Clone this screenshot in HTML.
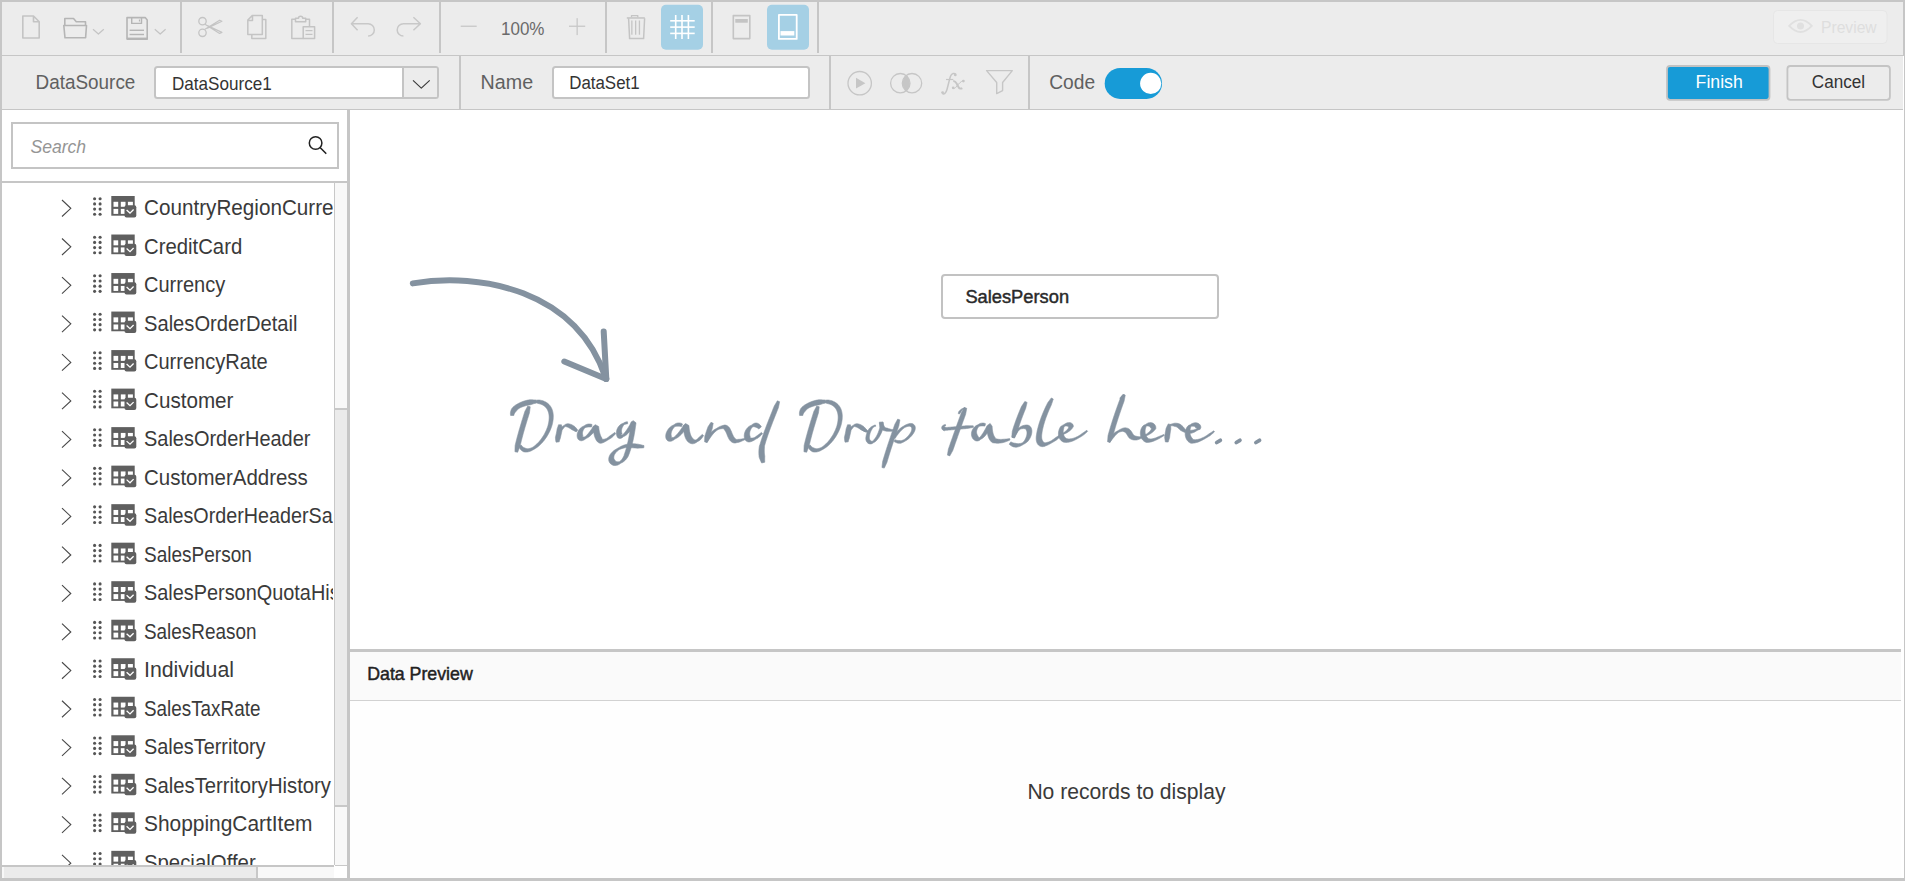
<!DOCTYPE html>
<html><head><meta charset="utf-8"><style>
html,body{margin:0;padding:0;width:1907px;height:882px;overflow:hidden;background:#fff;}
body{position:relative;font-family:"Liberation Sans", sans-serif;}
.t{position:absolute;white-space:nowrap;}
svg{position:absolute;left:0;top:0;}
#tree{position:absolute;left:2px;top:183px;width:331px;height:682px;overflow:hidden;}
#tree .inner{position:absolute;left:-2px;top:-183px;width:1907px;height:882px;}
</style></head><body>
<svg width="1907" height="882" viewBox="0 0 1907 882">
<rect x="0" y="0" width="1905" height="881" fill="#c6c6c6" />
<rect x="2" y="2" width="1901" height="53" fill="#ececec" />
<rect x="2" y="55" width="1901" height="1" fill="#c6c6c6" />
<rect x="2" y="56" width="1901" height="53" fill="#ececec" />
<rect x="2" y="109" width="1901" height="1" fill="#c6c6c6" />
<rect x="2" y="110" width="345" height="768" fill="#ffffff" />
<rect x="350" y="110" width="1553" height="539" fill="#ffffff" />
<rect x="350" y="652" width="1553" height="48" fill="#fafafa" />
<rect x="350" y="700" width="1553" height="1" fill="#d2d2d2" />
<rect x="350" y="701" width="1553" height="177" fill="#fefefe" />
<rect x="2" y="181" width="345" height="2" fill="#c6c6c6" />
<rect x="11" y="122" width="328" height="47" fill="#c4c4c4" />
<rect x="13" y="124" width="324" height="43" fill="#ffffff" />
<rect x="2" y="865" width="332" height="2" fill="#c6c6c6" />
<rect x="2" y="867" width="332" height="11" fill="#f8f8f8" />
<rect x="4" y="867" width="252" height="11" fill="#ebebeb" />
<rect x="256" y="867" width="2" height="11" fill="#c8c8c8" />
<rect x="334" y="182" width="1" height="684" fill="#c8c8c8" />
<rect x="335" y="183" width="12" height="682" fill="#f8f8f8" />
<rect x="335" y="408" width="12" height="2" fill="#c8c8c8" />
<rect x="335" y="410" width="12" height="395" fill="#ebebeb" />
<rect x="335" y="805" width="12" height="2" fill="#c8c8c8" />
<rect x="334" y="865" width="13" height="13" fill="#ffffff" />
<rect x="335" y="865" width="12" height="1" fill="#c8c8c8" />
<rect x="0" y="878" width="1905" height="3" fill="#c6c6c6" />
<rect x="1903" y="56" width="1" height="822" fill="#ffffff" />
<rect x="1901" y="649" width="2" height="229" fill="#ffffff" />
<rect x="180" y="2" width="2" height="51" fill="#c6c6c6" />
<rect x="332" y="2" width="2" height="51" fill="#c6c6c6" />
<rect x="439" y="2" width="2" height="51" fill="#c6c6c6" />
<rect x="605" y="2" width="2" height="51" fill="#c6c6c6" />
<rect x="711" y="2" width="2" height="51" fill="#c6c6c6" />
<rect x="817" y="2" width="2" height="51" fill="#c6c6c6" />
<path d="M22.8 16 H33.5 L39.2 21.7 V38 H22.8 Z M33.5 16 V21.7 H39.2" stroke="#c4c4c4" stroke-width="1.6" fill="none" stroke-linejoin="round" />
<path d="M64.8 25.5 V18.5 H73.5 L76.3 21.8 H85.5 V25.5 M63.8 25.5 H86.5 L85.6 37.8 H65 Z" stroke="#b5b5b5" stroke-width="1.6" fill="none" stroke-linejoin="round" />
<path d="M93 29.2 L98.4 34 L103.8 29.2" stroke="#c4c4c4" stroke-width="1.2" fill="none" stroke-linejoin="round" />
<path d="M127 17.6 H145.2 L147.2 20 V39.1 H127 Z" stroke="#b5b5b5" stroke-width="1.6" fill="none" stroke-linejoin="round" />
<rect x="127" y="37.6" width="20.6" height="2.2" fill="#b5b5b5" />
<path d="M131.7 17.6 V23.4 H141.5 V17.6" stroke="#b5b5b5" stroke-width="1.4" fill="none" stroke-linejoin="round" />
<rect x="138.9" y="19.5" width="1.2" height="2" fill="#b5b5b5" />
<rect x="129.6" y="29.6" width="14.4" height="1.4" fill="#b5b5b5" />
<rect x="129.6" y="33.8" width="14.4" height="1.4" fill="#b5b5b5" />
<path d="M154.8 29.2 L160.2 34 L165.6 29.2" stroke="#c4c4c4" stroke-width="1.2" fill="none" stroke-linejoin="round" />
<circle cx="202.5" cy="21.2" r="3.7" stroke="#c4c4c4" stroke-width="1.3" fill="none"/>
<circle cx="202.5" cy="32.8" r="3.7" stroke="#c4c4c4" stroke-width="1.3" fill="none"/>
<path d="M205 29.3 L219.6 20.2 L221.9 21.2 L207.4 28.1 M205 24.3 L219.6 33.4 L221.9 32.4 L207.4 25.5" stroke="#c4c4c4" stroke-width="1.2" fill="none" stroke-linejoin="round" />
<path d="M251.8 34.6 V38.5 H265.8 V19.4 H262.3" stroke="#c4c4c4" stroke-width="1.5" fill="none" stroke-linejoin="round" />
<path d="M247.8 20 L252.5 15.4 H262.3 V34.5 H247.8 Z M252.5 15.4 V20.5 H247.8" stroke="#c4c4c4" stroke-width="1.5" fill="none" stroke-linejoin="round" />
<path d="M295.5 19.3 H291.8 V38.5 H303.2 M305.7 19.3 H309.5 V26.8" stroke="#c4c4c4" stroke-width="1.5" fill="none" stroke-linejoin="round" />
<path d="M295.5 21.7 V18.3 H298.5 A2.1 2.1 0 0 1 302.7 18.3 H305.7 V21.7 Z" stroke="#c4c4c4" stroke-width="1.5" fill="none" stroke-linejoin="round" />
<path d="M303.2 26.8 H314.6 V38.5 H303.2 Z" stroke="#c4c4c4" stroke-width="1.5" fill="none" stroke-linejoin="round" />
<rect x="305.5" y="30" width="7" height="1.2" fill="#c4c4c4" />
<rect x="305.5" y="33.8" width="7" height="1.2" fill="#c4c4c4" />
<path d="M357.6 17.3 L351.4 23.7 L357.6 30.3 M351.4 23.7 H368.1 A6.2 6.2 0 0 1 368.1 36.1" stroke="#c8c8c8" stroke-width="1.5" fill="none" stroke-linejoin="round" />
<path d="M413.4 17.3 L420.4 23.7 L413.4 30.3 M420.4 23.7 H403.4 A6.2 6.2 0 0 0 403.4 36.1" stroke="#c8c8c8" stroke-width="1.5" fill="none" stroke-linejoin="round" />
<rect x="460.7" y="25.6" width="16" height="1.3" fill="#c8c8c8" />
<rect x="569" y="25.6" width="16.2" height="1.3" fill="#c8c8c8" />
<rect x="576.5" y="18.2" width="1.3" height="16.9" fill="#c8c8c8" />
<path d="M628.6 18.2 L629.6 38.6 H643.6 L644.6 18.2" stroke="#c4c4c4" stroke-width="1.5" fill="none" stroke-linejoin="round" />
<rect x="626.8" y="17.2" width="18" height="1.5" fill="#c4c4c4" />
<path d="M631.5 17.2 V15.6 H637.8 V17.2" stroke="#c4c4c4" stroke-width="1.3" fill="none" stroke-linejoin="round" />
<rect x="631.1999999999999" y="20.5" width="1.3" height="14.2" fill="#c4c4c4" />
<rect x="635.0" y="20.5" width="1.3" height="14.2" fill="#c4c4c4" />
<rect x="638.8" y="20.5" width="1.3" height="14.2" fill="#c4c4c4" />
<rect x="661" y="4.8" width="42" height="45" rx="5" fill="#a5d0e5"/>
<rect x="674.9000000000001" y="15" width="1.6" height="24" fill="#ffffff" />
<rect x="681.2" y="15" width="1.6" height="24" fill="#ffffff" />
<rect x="687.6" y="15" width="1.6" height="24" fill="#ffffff" />
<rect x="670.2" y="20.0" width="24.5" height="1.6" fill="#ffffff" />
<rect x="670.2" y="26.3" width="24.5" height="1.6" fill="#ffffff" />
<rect x="670.2" y="32.6" width="24.5" height="1.6" fill="#ffffff" />
<path d="M733.3 15.6 H749.8 V38.6 H733.3 Z" stroke="#c4c4c4" stroke-width="1.6" fill="none" stroke-linejoin="round" />
<rect x="735.3" y="19" width="12.5" height="3.7" fill="#c4c4c4" />
<rect x="767" y="4.8" width="42" height="45" rx="5" fill="#a5d0e5"/>
<path d="M778.9 14.9 H796.7 V38.9 H778.9 Z" stroke="#ffffff" stroke-width="1.8" fill="none" stroke-linejoin="round" />
<rect x="780.5" y="31.1" width="13.8" height="4.4" fill="#ffffff" />
<rect x="1773.5" y="10.5" width="113.5" height="33" rx="4" fill="#efefef" stroke="#e6e6e6" stroke-width="1"/>
<path d="M1789.2 25.9 Q1800.5 13.8 1811.8 25.9 Q1800.5 38 1789.2 25.9 Z" stroke="#e0e0e0" stroke-width="1.9" fill="none"/>
<circle cx="1800.5" cy="25.9" r="3.5" fill="#e0e0e0"/>
<rect x="459" y="56" width="2" height="53" fill="#c6c6c6" />
<rect x="829" y="56" width="2" height="53" fill="#c6c6c6" />
<rect x="1028" y="56" width="2" height="53" fill="#c6c6c6" />
<rect x="155" y="67" width="283" height="31" rx="2.5" fill="#ffffff" stroke="#c4c4c4" stroke-width="2"/>
<path d="M403 68 H435.5 Q437 68 437 69.5 V95.5 Q437 97 435.5 97 H403 Z" fill="#ececec"/>
<rect x="402" y="67" width="2" height="31" fill="#c4c4c4" />
<path d="M413 80.3 L421.3 88.2 L429.7 80.3" stroke="#3a3a3a" stroke-width="1.15" fill="none" stroke-linejoin="round" />
<rect x="553" y="67" width="256" height="31" rx="2.5" fill="#ffffff" stroke="#c4c4c4" stroke-width="2"/>
<circle cx="859.7" cy="83.2" r="11.7" stroke="#c6c6c6" stroke-width="1.3" fill="none"/>
<path d="M856 77.8 L865.4 83.2 L856 88.5 Z" stroke="none" stroke-width="0" fill="#c6c6c6" stroke-linejoin="round" />
<circle cx="900.3" cy="83.2" r="9.7" stroke="#c6c6c6" stroke-width="1.3" fill="none"/>
<circle cx="912" cy="83.2" r="9.7" stroke="#c6c6c6" stroke-width="1.3" fill="none"/>
<path d="M906.15 75.6 A9.7 9.7 0 0 1 906.15 90.8 A9.7 9.7 0 0 1 906.15 75.6 Z" stroke="none" stroke-width="0" fill="#c6c6c6" stroke-linejoin="round" />
<path d="M955.8 74.4 C954.6 72.8 951.6 72.9 950.4 76.4 C949.2 80 948.1 85.8 946.9 89.8 C945.9 93.2 944.1 94.8 942.3 93.4" stroke="#c6c6c6" stroke-width="1.5" fill="none" stroke-linejoin="round" />
<circle cx="955.3" cy="74.9" r="1.4" fill="#c6c6c6"/>
<circle cx="942.6" cy="92.6" r="1.4" fill="#c6c6c6"/>
<rect x="946" y="78.9" width="7.3" height="1.2" fill="#c6c6c6" />
<path d="M953.2 81.2 C955.2 80.8 956.2 82.5 957.2 84.5 L958.6 87.2 C959.3 88.6 960.8 89 962.3 88.2" stroke="#c6c6c6" stroke-width="1.9" fill="none" stroke-linejoin="round" />
<path d="M963.6 80.6 C961 81.2 958.2 84 955.8 87.3 C955 88.4 953.8 88.9 952.5 88.2" stroke="#c6c6c6" stroke-width="1.0" fill="none" stroke-linejoin="round" />
<circle cx="963.4" cy="81.1" r="1.35" fill="#c6c6c6"/>
<circle cx="953.2" cy="87.8" r="1.35" fill="#c6c6c6"/>
<path d="M986.6 70.6 H1012.3 L1002.6 82.5 V90.6 L996.7 93.6 V82.5 Z" stroke="#c6c6c6" stroke-width="1.4" fill="none" stroke-linejoin="round" />
<rect x="1104.7" y="67.9" width="57.3" height="31" rx="15.5" fill="#179bd7"/>
<circle cx="1150.7" cy="83.4" r="10.6" fill="#ffffff"/>
<rect x="1667" y="66" width="102.5" height="33.8" rx="3" fill="#179bd7" stroke="#c2c2c2" stroke-width="1.8"/>
<rect x="1787.4" y="66" width="102.5" height="33.8" rx="3" fill="#ececec" stroke="#c4c4c4" stroke-width="1.8"/>
<circle cx="315.6" cy="143" r="6.3" stroke="#222222" stroke-width="1.5" fill="none"/>
<path d="M320.3 147.8 L325.8 153.3" stroke="#222222" stroke-width="1.6" fill="none" stroke-linejoin="round" stroke-linecap="round"/>
<rect x="942" y="275" width="276" height="43" rx="3" fill="#fff" stroke="#c2c2c2" stroke-width="2"/>
<path d="M412.8 283.4 C480 272 576 290 605.5 377.5" stroke="#8492a0" stroke-width="5.9" fill="none" stroke-linecap="round" stroke-linejoin="round"/>
<path d="M603.7 331.5 L606.3 379" stroke="#8492a0" stroke-width="6" fill="none" stroke-linecap="round" stroke-linejoin="round"/>
<path d="M564.3 361.5 L606.3 379" stroke="#8492a0" stroke-width="6" fill="none" stroke-linecap="round" stroke-linejoin="round"/>
<path d="M527.74 406.00 L527.37 406.69 L527.01 407.38 L526.64 408.07 L526.27 408.76 L525.91 409.45 L525.54 410.14 L525.17 410.83 L524.83 411.54 L524.60 412.27 L524.37 413.01 L524.13 413.74 L523.90 414.48 L523.67 415.21 L523.44 415.95 L523.21 416.69 L522.98 417.42 L522.75 418.16 L522.52 418.89 L522.30 419.63 L522.07 420.36 L521.84 421.10 L521.62 421.83 L521.40 422.56 L521.18 423.30 L520.96 424.03 L520.74 424.76 L520.52 425.49 L520.30 426.22 L520.09 426.95 L519.87 427.68 L519.66 428.40 L519.45 429.13 L519.24 429.85 L519.03 430.58 L518.83 431.30 L518.62 432.02 L518.42 432.74 L518.22 433.46 L518.02 434.18 L517.82 434.89 L517.63 435.61 L517.44 436.32 L517.25 437.03 L517.06 437.74 L516.87 438.45 L516.69 439.16 L516.51 439.86 L516.33 440.57 L516.15 441.27 L515.98 441.97 L515.81 442.66 L515.64 443.36 L515.47 444.05 L515.31 444.74 L515.15 445.43 L515.09 446.14 L515.06 446.85 L515.04 447.56 L515.02 448.27 L515.00 448.97 L514.98 449.67 L514.96 450.36 L514.95 451.05 L514.95 451.74 L517.65 452.26 L517.90 451.63 L518.16 451.00 L518.41 450.37 L518.67 449.74 L518.93 449.10 L519.20 448.46 L519.47 447.82 L519.74 447.18 L519.99 446.53 L520.14 445.86 L520.29 445.18 L520.45 444.50 L520.61 443.82 L520.78 443.13 L520.94 442.45 L521.11 441.76 L521.28 441.07 L521.45 440.37 L521.63 439.68 L521.81 438.98 L521.99 438.28 L522.17 437.58 L522.36 436.88 L522.55 436.17 L522.74 435.46 L522.93 434.76 L523.12 434.05 L523.32 433.33 L523.52 432.62 L523.72 431.91 L523.92 431.19 L524.13 430.47 L524.33 429.75 L524.54 429.03 L524.75 428.31 L524.96 427.59 L525.17 426.87 L525.38 426.14 L525.60 425.42 L525.82 424.69 L526.03 423.96 L526.25 423.23 L526.47 422.51 L526.70 421.78 L526.92 421.05 L527.14 420.32 L527.37 419.58 L527.59 418.85 L527.82 418.12 L528.05 417.39 L528.27 416.66 L528.50 415.92 L528.73 415.19 L528.96 414.46 L529.19 413.73 L529.43 412.99 L529.55 412.23 L529.65 411.45 L529.75 410.68 L529.85 409.90 L529.95 409.13 L530.06 408.35 L530.16 407.58 L530.26 406.80Z" fill="#8492a0" stroke="#8492a0" stroke-width="0.6" stroke-linejoin="round"/>
<path d="M513.80 415.51 L513.92 414.98 L514.06 414.53 L514.22 414.11 L514.40 413.71 L514.60 413.32 L514.81 412.96 L515.05 412.60 L515.31 412.27 L515.58 411.94 L515.88 411.62 L516.16 411.29 L516.42 410.92 L516.71 410.55 L517.03 410.18 L517.38 409.81 L517.77 409.45 L518.19 409.09 L518.63 408.73 L519.12 408.39 L519.63 408.05 L520.19 407.76 L520.78 407.48 L521.39 407.21 L522.03 406.95 L522.69 406.70 L523.38 406.45 L524.09 406.22 L524.82 406.00 L525.57 405.79 L526.35 405.59 L527.15 405.40 L527.97 405.22 L528.81 405.06 L529.66 404.91 L530.54 404.75 L531.41 404.44 L532.30 404.15 L533.22 403.85 L534.15 403.57 L535.11 403.30 L536.10 403.03 L535.90 400.17 L534.85 400.05 L533.81 399.95 L532.77 399.87 L531.74 399.81 L530.73 399.78 L529.72 399.76 L528.76 399.92 L527.81 400.11 L526.88 400.32 L525.97 400.55 L525.08 400.79 L524.21 401.04 L523.35 401.32 L522.52 401.60 L521.71 401.91 L520.92 402.23 L520.15 402.56 L519.41 402.92 L518.69 403.29 L517.99 403.67 L517.31 404.07 L516.64 404.45 L515.98 404.85 L515.35 405.26 L514.75 405.70 L514.16 406.15 L513.60 406.62 L513.07 407.11 L512.56 407.63 L512.08 408.17 L511.69 408.77 L511.37 409.41 L511.10 410.07 L510.87 410.74 L510.68 411.41 L510.54 412.10 L510.46 412.78 L510.42 413.48 L510.43 414.17 L510.49 414.86 L510.60 415.49Z" fill="#8492a0" stroke="#8492a0" stroke-width="0.6" stroke-linejoin="round"/>
<path d="M533.05 402.51 L534.02 402.59 L534.94 402.71 L535.83 402.86 L536.67 403.04 L537.47 403.25 L538.23 403.48 L538.95 403.70 L539.65 403.87 L540.32 404.06 L540.96 404.28 L541.56 404.51 L542.13 404.77 L542.68 405.04 L543.19 405.33 L543.67 405.63 L544.13 405.95 L544.56 406.28 L544.97 406.63 L545.36 406.99 L545.72 407.36 L546.06 407.75 L546.39 408.15 L546.69 408.57 L546.98 409.01 L547.25 409.45 L547.50 409.92 L547.74 410.40 L547.96 410.90 L548.16 411.41 L548.34 411.95 L548.51 412.50 L548.65 413.06 L548.78 413.65 L548.89 414.25 L548.98 414.87 L549.06 415.50 L549.11 416.15 L549.14 416.81 L549.15 417.48 L549.14 418.17 L549.11 418.87 L549.06 419.59 L549.00 420.31 L548.91 421.05 L548.80 421.79 L548.67 422.55 L548.52 423.31 L548.35 424.08 L548.16 424.85 L547.95 425.64 L547.73 426.41 L547.47 427.22 L547.17 428.05 L546.85 428.87 L546.52 429.69 L546.17 430.49 L545.80 431.29 L545.42 432.08 L545.02 432.87 L544.61 433.64 L544.19 434.40 L543.75 435.15 L543.31 435.89 L542.85 436.61 L542.37 437.33 L541.89 438.03 L541.40 438.71 L540.91 439.38 L540.40 440.03 L539.88 440.67 L539.36 441.29 L538.84 441.89 L538.30 442.47 L537.77 443.03 L537.23 443.58 L536.68 444.10 L536.14 444.61 L535.59 445.09 L535.04 445.55 L534.49 445.99 L533.94 446.41 L533.39 446.80 L532.84 447.17 L532.27 447.47 L531.70 447.73 L531.14 447.96 L530.58 448.16 L530.03 448.32 L529.49 448.46 L528.97 448.56 L528.46 448.63 L527.96 448.67 L527.48 448.68 L527.02 448.66 L526.58 448.61 L526.27 448.50 L525.49 448.26 L524.85 447.96 L524.25 447.74 L523.71 447.48 L523.22 447.18 L522.76 446.85 L522.34 446.47 L521.96 446.05 L521.63 445.61 L521.33 445.10 L519.07 445.90 L519.20 446.60 L519.44 447.39 L519.77 448.18 L520.23 448.97 L520.81 449.74 L521.53 450.46 L522.38 451.10 L523.37 451.64 L524.52 451.94 L525.73 452.10 L526.50 452.05 L527.15 451.99 L527.79 451.89 L528.44 451.76 L529.07 451.59 L529.71 451.40 L530.34 451.17 L530.96 450.91 L531.59 450.63 L532.21 450.32 L532.83 449.99 L533.45 449.63 L534.07 449.25 L534.71 448.90 L535.36 448.51 L536.00 448.10 L536.64 447.66 L537.28 447.20 L537.91 446.71 L538.54 446.20 L539.16 445.66 L539.78 445.11 L540.39 444.53 L541.00 443.93 L541.60 443.31 L542.19 442.67 L542.78 442.01 L543.35 441.33 L543.92 440.63 L544.48 439.92 L545.02 439.19 L545.56 438.45 L546.08 437.69 L546.59 436.92 L547.09 436.13 L547.58 435.33 L548.05 434.51 L548.51 433.68 L548.95 432.85 L549.38 432.00 L549.79 431.14 L550.18 430.27 L550.56 429.39 L550.91 428.50 L551.27 427.59 L551.56 426.72 L551.82 425.87 L552.06 425.02 L552.28 424.17 L552.48 423.33 L552.66 422.49 L552.82 421.66 L552.95 420.83 L553.06 420.00 L553.15 419.18 L553.22 418.37 L553.26 417.57 L553.28 416.77 L553.28 415.97 L553.24 415.19 L553.19 414.41 L553.11 413.65 L553.00 412.89 L552.86 412.14 L552.70 411.40 L552.50 410.68 L552.28 409.97 L552.02 409.27 L551.74 408.59 L551.42 407.92 L551.07 407.27 L550.69 406.64 L550.27 406.03 L549.82 405.44 L549.34 404.88 L548.83 404.34 L548.28 403.83 L547.71 403.34 L547.10 402.89 L546.47 402.47 L545.81 402.07 L545.12 401.71 L544.41 401.38 L543.67 401.08 L542.90 400.82 L542.11 400.58 L541.30 400.38 L540.46 400.21 L539.60 400.07 L538.71 400.03 L537.79 400.06 L536.86 400.13 L535.90 400.23 L534.94 400.35 L533.95 400.51 L532.95 400.69Z" fill="#8492a0" stroke="#8492a0" stroke-width="0.6" stroke-linejoin="round"/>
<path d="M558.51 424.77 L558.24 425.67 L557.97 426.52 L557.68 427.34 L557.37 428.15 L557.10 428.94 L557.00 429.75 L556.88 430.55 L556.74 431.35 L556.60 432.13 L556.44 432.91 L556.27 433.67 L556.10 434.43 L555.92 435.18 L555.75 435.91 L555.58 436.64 L555.45 437.37 L555.47 438.12 L555.51 438.85 L555.57 439.57 L555.65 440.27 L555.77 440.96 L555.93 441.63 L556.15 442.21 L559.25 441.79 L559.33 441.31 L559.42 440.86 L559.55 440.40 L559.70 439.90 L559.89 439.38 L560.10 438.83 L560.35 438.26 L560.48 437.62 L560.61 436.95 L560.75 436.25 L560.91 435.52 L561.08 434.77 L561.26 433.98 L561.45 433.17 L561.64 432.34 L561.83 431.48 L562.01 430.60 L562.18 429.69 L562.15 428.74 L562.05 427.77 L561.91 426.78 L561.73 425.79 L561.49 424.83Z" fill="#8492a0" stroke="#8492a0" stroke-width="0.6" stroke-linejoin="round"/>
<path d="M562.74 429.40 L563.17 428.79 L563.55 428.27 L563.90 427.80 L564.24 427.38 L564.56 427.00 L564.88 426.63 L565.36 426.58 L565.81 426.61 L566.23 426.70 L566.64 426.81 L567.03 426.95 L567.45 427.12 L567.88 427.30 L568.35 427.52 L568.84 427.77 L569.38 428.06 L569.95 428.39 L570.55 428.76 L571.19 429.18 L571.85 429.65 L572.60 430.08 L573.45 430.48 L574.34 430.92 L575.26 431.39 L576.23 431.91 L577.77 430.09 L577.07 429.21 L576.38 428.36 L575.68 427.56 L574.98 426.80 L574.23 426.18 L573.42 425.67 L572.63 425.22 L571.84 424.81 L571.06 424.47 L570.28 424.19 L569.50 423.97 L568.72 423.83 L567.96 423.78 L567.21 423.82 L566.48 423.96 L565.80 424.19 L565.18 424.52 L564.62 424.93 L564.13 425.38 L563.52 425.66 L562.95 426.06 L562.43 426.56 L561.97 427.16 L561.57 427.84 L561.26 428.60Z" fill="#8492a0" stroke="#8492a0" stroke-width="0.6" stroke-linejoin="round"/>
<path d="M592.07 424.54 L591.15 424.22 L590.16 424.05 L589.17 424.00 L588.20 424.07 L587.26 424.24 L586.37 424.52 L585.52 424.89 L584.76 425.40 L584.03 425.92 L583.21 426.27 L582.40 426.68 L581.64 427.17 L580.90 427.73 L580.22 428.36 L579.58 429.04 L578.99 429.79 L578.47 430.60 L578.02 431.47 L577.65 432.39 L577.37 433.35 L577.19 434.36 L577.12 435.41 L577.17 436.47 L577.29 437.30 L577.51 438.01 L577.83 438.70 L578.27 439.34 L578.83 439.90 L579.50 440.33 L580.24 440.62 L581.00 440.74 L581.74 440.72 L582.44 440.59 L583.08 440.38 L583.68 440.11 L584.25 439.80 L584.79 439.45 L585.33 439.08 L585.86 438.67 L586.46 438.31 L587.13 438.00 L587.81 437.62 L588.51 437.17 L589.22 436.66 L589.95 436.09 L590.68 435.45 L591.42 434.75 L592.17 433.98 L592.92 433.15 L593.69 432.26 L594.46 431.30 L595.24 430.28 L596.02 429.19 L596.80 428.03 L596.39 426.90 L593.15 426.78 L593.19 427.74 L593.24 428.72 L593.33 429.72 L593.44 430.72 L593.57 431.73 L593.74 432.74 L593.93 433.74 L594.15 434.73 L594.40 435.71 L594.68 436.67 L595.00 437.60 L595.36 438.50 L595.76 439.37 L596.22 440.20 L596.75 440.99 L597.37 441.71 L598.11 442.35 L598.97 442.86 L599.95 443.18 L601.00 443.23 L601.98 443.02 L602.86 442.73 L603.67 442.40 L604.45 442.03 L605.22 441.62 L605.98 441.18 L606.74 440.70 L607.50 440.20 L608.31 439.76 L609.14 439.31 L609.95 438.82 L610.76 438.31 L611.53 437.77 L612.25 437.15 L612.93 436.53 L613.58 435.91 L614.20 435.30 L614.78 434.70 L615.32 434.12 L615.82 433.58 L614.78 432.42 L614.19 432.85 L613.57 433.31 L612.91 433.79 L612.22 434.28 L611.51 434.78 L610.78 435.29 L610.04 435.79 L609.34 436.35 L608.63 436.91 L607.92 437.45 L607.22 437.97 L606.50 438.43 L605.74 438.75 L604.99 439.00 L604.28 439.18 L603.60 439.28 L602.98 439.28 L602.44 439.18 L602.02 438.98 L601.94 438.66 L601.96 438.40 L601.98 438.19 L601.92 438.00 L601.79 437.78 L601.59 437.48 L601.35 437.09 L601.09 436.63 L600.82 436.08 L600.55 435.46 L600.29 434.78 L600.05 434.05 L599.82 433.28 L599.61 432.47 L599.41 431.64 L599.24 430.78 L599.09 429.92 L598.96 429.06 L598.85 428.20 L598.76 427.36 L598.70 426.54 L595.41 424.70 L593.52 425.98 L592.84 427.10 L592.18 428.17 L591.52 429.17 L590.88 430.11 L590.25 430.99 L589.63 431.82 L589.03 432.58 L588.45 433.30 L587.88 433.95 L587.33 434.56 L586.81 435.12 L586.30 435.63 L585.82 436.09 L585.36 436.52 L584.86 436.78 L584.34 436.89 L583.87 436.93 L583.45 436.89 L583.10 436.79 L582.82 436.63 L582.64 436.43 L582.57 436.21 L582.59 436.00 L582.69 435.85 L582.82 435.76 L582.94 435.73 L583.02 435.73 L583.04 435.73 L583.01 435.70 L582.93 435.60 L582.83 435.53 L582.70 435.03 L582.60 434.52 L582.53 433.98 L582.51 433.43 L582.53 432.87 L582.60 432.28 L582.72 431.69 L582.90 431.09 L583.12 430.49 L583.41 429.90 L583.75 429.32 L584.14 428.75 L584.58 428.20 L585.08 427.68 L585.76 427.45 L586.46 427.32 L587.14 427.17 L587.82 427.06 L588.51 426.99 L589.22 426.95 L589.94 426.95 L590.68 426.99 L591.53 427.06Z" fill="#8492a0" stroke="#8492a0" stroke-width="0.6" stroke-linejoin="round"/>
<path d="M627.52 421.83 L626.62 421.85 L625.71 422.04 L624.84 422.35 L624.04 422.75 L623.29 423.22 L622.44 423.51 L621.60 423.88 L620.81 424.36 L620.08 424.94 L619.41 425.59 L618.79 426.30 L618.23 427.06 L617.73 427.87 L617.30 428.73 L616.95 429.62 L616.67 430.55 L616.47 431.51 L616.37 432.50 L616.37 433.50 L616.48 434.52 L616.71 435.53 L617.07 436.52 L617.80 437.78 L619.36 438.45 L620.21 438.47 L620.98 438.31 L621.65 438.02 L622.23 437.67 L622.74 437.29 L623.22 436.88 L623.70 436.50 L624.31 436.27 L624.91 435.96 L625.51 435.58 L626.12 435.15 L626.72 434.66 L627.32 434.11 L627.93 433.52 L628.53 432.89 L629.13 432.21 L629.72 431.50 L630.32 430.74 L630.91 429.95 L631.51 429.13 L632.09 428.28 L632.67 427.39 L633.25 426.48 L633.82 425.54 L634.38 424.58 L634.93 423.60 L634.16 422.77 L631.16 422.20 L631.05 423.00 L630.95 423.79 L630.85 424.58 L630.74 425.36 L630.64 426.14 L630.53 426.92 L630.42 427.68 L630.31 428.44 L630.20 429.20 L630.09 429.95 L629.98 430.70 L629.86 431.44 L629.75 432.17 L629.63 432.90 L629.51 433.63 L629.39 434.35 L629.26 435.06 L629.14 435.77 L629.01 436.48 L628.88 437.18 L628.75 437.87 L628.61 438.56 L628.47 439.25 L628.33 439.93 L628.19 440.61 L628.05 441.29 L627.90 441.96 L627.75 442.62 L627.60 443.29 L627.44 443.94 L627.28 444.60 L627.12 445.25 L626.95 445.89 L626.79 446.54 L626.61 447.18 L626.44 447.81 L626.26 448.45 L626.08 449.08 L625.89 449.70 L625.70 450.33 L625.50 450.95 L625.31 451.56 L625.10 452.18 L624.90 452.79 L624.69 453.40 L624.47 454.01 L624.25 454.61 L624.18 455.13 L623.85 455.98 L623.45 456.82 L623.03 457.60 L622.58 458.34 L622.11 459.04 L621.62 459.69 L621.11 460.29 L620.59 460.85 L620.05 461.37 L619.41 461.65 L618.75 461.79 L618.12 461.85 L617.53 461.84 L616.98 461.76 L616.50 461.61 L616.09 461.42 L615.75 461.19 L615.47 460.95 L615.24 460.70 L615.06 460.45 L614.89 460.20 L614.71 459.94 L614.53 459.66 L614.33 459.32 L614.17 459.13 L614.07 459.05 L613.97 458.67 L613.89 458.27 L613.83 457.85 L613.82 457.40 L613.84 456.93 L613.91 456.43 L614.03 455.91 L614.21 455.37 L614.44 454.82 L614.72 454.26 L615.06 453.71 L615.44 453.15 L615.87 452.60 L616.35 452.05 L616.87 451.52 L617.44 451.00 L618.04 450.49 L618.67 450.00 L619.36 449.57 L620.12 449.24 L620.90 448.93 L621.69 448.64 L622.50 448.38 L623.32 448.15 L624.15 447.94 L624.99 447.76 L625.84 447.60 L626.69 447.48 L627.54 447.39 L628.40 447.33 L629.25 447.31 L629.94 447.45 L631.37 447.66 L632.91 447.80 L634.46 447.93 L636.00 448.06 L637.55 448.20 L639.11 448.12 L640.67 448.02 L642.24 447.92 L643.80 447.82 L644.00 445.58 L642.47 445.21 L640.95 444.84 L639.42 444.48 L637.90 444.14 L636.35 444.00 L634.81 443.87 L633.26 443.74 L631.72 443.60 L630.06 443.55 L628.94 443.82 L627.97 443.99 L627.02 444.19 L626.08 444.43 L625.15 444.70 L624.24 445.00 L623.34 445.33 L622.46 445.69 L621.60 446.07 L620.77 446.49 L619.95 446.92 L619.17 447.39 L618.41 447.87 L617.63 448.30 L616.85 448.71 L616.09 449.14 L615.36 449.60 L614.65 450.08 L613.97 450.58 L613.32 451.10 L612.69 451.65 L612.09 452.22 L611.53 452.82 L611.00 453.44 L610.51 454.10 L610.06 454.79 L609.67 455.51 L609.32 456.28 L609.05 457.08 L608.85 457.92 L608.74 458.79 L608.72 459.68 L608.83 460.87 L609.32 462.04 L609.87 462.92 L610.53 463.69 L611.28 464.35 L612.11 464.86 L612.99 465.23 L613.90 465.46 L614.81 465.54 L615.70 465.51 L616.56 465.36 L617.39 465.13 L618.18 464.82 L618.93 464.45 L619.66 464.02 L620.36 463.53 L621.08 463.06 L621.89 462.69 L622.70 462.24 L623.50 461.70 L624.28 461.09 L625.04 460.40 L625.78 459.63 L626.49 458.79 L627.16 457.88 L627.82 456.87 L628.23 456.16 L628.49 455.54 L628.74 454.90 L628.98 454.27 L629.22 453.63 L629.46 452.99 L629.69 452.35 L629.91 451.71 L630.14 451.06 L630.35 450.41 L630.56 449.75 L630.77 449.09 L630.97 448.43 L631.17 447.77 L631.37 447.10 L631.56 446.43 L631.74 445.76 L631.92 445.08 L632.10 444.40 L632.28 443.71 L632.45 443.02 L632.62 442.33 L632.78 441.63 L632.94 440.93 L633.10 440.23 L633.25 439.52 L633.40 438.81 L633.55 438.09 L633.70 437.37 L633.84 436.65 L633.98 435.92 L634.12 435.19 L634.25 434.45 L634.38 433.71 L634.51 432.96 L634.64 432.21 L634.77 431.46 L634.89 430.70 L635.01 429.93 L635.13 429.16 L635.25 428.39 L635.37 427.61 L635.48 426.83 L635.59 426.04 L635.71 425.24 L635.82 424.44 L635.93 423.64 L636.03 422.83 L633.24 420.63 L631.45 421.77 L630.97 422.73 L630.48 423.66 L629.99 424.57 L629.49 425.46 L628.99 426.32 L628.49 427.15 L627.99 427.95 L627.49 428.72 L627.00 429.46 L626.51 430.17 L626.03 430.83 L625.56 431.47 L625.10 432.06 L624.66 432.62 L624.23 433.13 L623.81 433.61 L623.42 434.05 L623.05 434.45 L622.71 434.83 L622.27 434.95 L621.85 434.94 L621.51 434.83 L621.26 434.63 L621.15 434.37 L621.17 434.11 L621.30 433.91 L622.20 434.22 L622.23 434.15 L622.04 433.74 L621.87 433.31 L621.73 432.85 L621.61 432.35 L621.53 431.82 L621.50 431.26 L621.50 430.68 L621.56 430.07 L621.66 429.46 L621.81 428.84 L622.00 428.22 L622.25 427.61 L622.54 427.00 L622.88 426.41 L623.24 425.81 L623.65 425.20 L624.12 424.64 L624.79 424.36 L625.48 424.16 L626.18 424.00 L626.89 423.89 L627.68 423.77Z" fill="#8492a0" stroke="#8492a0" stroke-width="0.6" stroke-linejoin="round"/>
<path d="M682.54 423.99 L681.67 423.49 L680.68 423.15 L679.68 422.95 L678.68 422.91 L677.70 423.00 L676.76 423.21 L675.86 423.53 L675.04 424.00 L674.29 424.54 L673.52 425.01 L672.68 425.39 L671.87 425.85 L671.09 426.38 L670.35 426.97 L669.65 427.61 L668.99 428.31 L668.38 429.05 L667.82 429.83 L667.32 430.65 L666.87 431.50 L666.48 432.39 L666.16 433.31 L665.91 434.26 L665.76 435.23 L665.71 436.19 L665.72 436.93 L665.81 437.62 L665.97 438.30 L666.22 438.97 L666.58 439.60 L667.04 440.18 L667.61 440.67 L668.26 441.04 L668.96 441.27 L669.67 441.37 L670.37 441.35 L671.02 441.23 L671.63 441.04 L672.20 440.80 L672.75 440.53 L673.28 440.22 L673.80 439.88 L674.32 439.52 L674.84 439.12 L675.43 438.80 L676.08 438.49 L676.74 438.11 L677.42 437.69 L678.10 437.20 L678.80 436.66 L679.51 436.07 L680.22 435.41 L680.95 434.71 L681.68 433.94 L682.43 433.13 L683.17 432.25 L683.93 431.32 L684.69 430.33 L685.46 429.29 L686.23 428.19 L687.01 427.03 L686.57 426.04 L683.37 425.88 L683.42 426.82 L683.48 427.75 L683.55 428.69 L683.64 429.62 L683.74 430.54 L683.86 431.45 L683.99 432.36 L684.15 433.25 L684.32 434.13 L684.52 434.99 L684.75 435.84 L685.00 436.68 L685.29 437.49 L685.61 438.28 L685.98 439.05 L686.39 439.80 L686.86 440.51 L687.38 441.18 L687.98 441.80 L688.63 442.36 L689.36 442.85 L690.14 443.24 L690.97 443.53 L691.83 443.71 L692.70 443.79 L693.77 443.62 L694.89 443.22 L695.83 442.75 L696.66 442.22 L697.41 441.63 L698.22 441.22 L699.04 440.81 L699.81 440.32 L700.47 439.72 L701.06 439.10 L701.60 438.45 L702.09 437.82 L702.53 437.20 L702.92 436.61 L703.28 436.07 L703.62 435.59 L702.38 434.41 L701.90 434.79 L701.37 435.22 L700.83 435.69 L700.28 436.19 L699.72 436.70 L699.15 437.22 L698.59 437.74 L698.02 438.25 L697.51 438.81 L696.99 439.36 L696.41 439.79 L695.69 439.92 L695.00 439.93 L694.35 439.83 L693.83 439.58 L693.65 439.22 L693.33 438.99 L693.08 438.74 L692.85 438.50 L692.64 438.26 L692.44 438.00 L692.22 437.73 L692.00 437.43 L691.77 437.09 L691.53 436.71 L691.29 436.28 L691.06 435.81 L690.82 435.29 L690.60 434.73 L690.39 434.12 L690.19 433.48 L690.00 432.80 L689.82 432.08 L689.66 431.34 L689.52 430.57 L689.39 429.78 L689.27 428.96 L689.17 428.13 L689.08 427.28 L689.00 426.42 L688.93 425.54 L685.63 423.56 L683.72 424.98 L683.04 426.11 L682.36 427.19 L681.70 428.21 L681.04 429.18 L680.40 430.10 L679.77 430.96 L679.15 431.78 L678.54 432.54 L677.95 433.26 L677.38 433.92 L676.82 434.54 L676.28 435.12 L675.76 435.65 L675.26 436.13 L674.78 436.58 L674.32 436.99 L673.83 437.30 L673.32 437.44 L672.84 437.52 L672.40 437.53 L672.01 437.49 L671.68 437.38 L671.43 437.23 L671.25 437.04 L671.17 436.84 L671.17 436.65 L671.25 436.49 L671.36 436.39 L671.48 436.35 L671.57 436.35 L671.62 436.36 L671.61 436.35 L671.56 436.30 L671.48 436.19 L671.39 436.01 L671.29 435.81 L671.19 435.31 L671.13 434.80 L671.10 434.24 L671.13 433.65 L671.21 433.03 L671.35 432.39 L671.54 431.73 L671.77 431.07 L672.06 430.42 L672.39 429.77 L672.76 429.13 L673.18 428.52 L673.63 427.92 L674.12 427.36 L674.64 426.82 L675.29 426.48 L676.01 426.34 L676.71 426.26 L677.37 426.18 L678.02 426.14 L678.66 426.15 L679.31 426.20 L679.97 426.29 L680.65 426.42 L681.46 426.61Z" fill="#8492a0" stroke="#8492a0" stroke-width="0.6" stroke-linejoin="round"/>
<path d="M710.99 422.33 L710.48 423.06 L709.98 423.80 L709.49 424.54 L709.00 425.28 L708.52 426.02 L708.06 426.76 L707.76 427.55 L707.47 428.34 L707.18 429.12 L706.90 429.89 L706.64 430.66 L706.38 431.42 L706.13 432.17 L705.89 432.91 L705.66 433.65 L705.43 434.38 L705.22 435.09 L705.01 435.80 L704.81 436.49 L704.76 437.21 L704.72 437.92 L704.69 438.61 L704.67 439.29 L704.66 439.95 L704.65 440.60 L704.64 441.22 L704.65 441.83 L707.35 442.37 L707.59 441.83 L707.83 441.28 L708.09 440.71 L708.35 440.14 L708.62 439.55 L708.91 438.95 L709.20 438.35 L709.49 437.73 L709.66 437.06 L709.84 436.38 L710.02 435.70 L710.21 435.00 L710.42 434.29 L710.62 433.57 L710.84 432.85 L711.07 432.11 L711.30 431.37 L711.55 430.63 L711.80 429.87 L712.06 429.11 L712.33 428.35 L712.46 427.52 L712.59 426.68 L712.73 425.84 L712.88 424.99 L713.04 424.14 L713.21 423.27Z" fill="#8492a0" stroke="#8492a0" stroke-width="0.6" stroke-linejoin="round"/>
<path d="M706.94 442.53 L707.43 441.75 L707.91 441.00 L708.40 440.28 L708.91 439.57 L709.42 438.88 L709.94 438.21 L710.43 437.53 L710.89 436.84 L711.36 436.17 L711.84 435.51 L712.34 434.88 L712.85 434.27 L713.37 433.67 L713.89 433.10 L714.43 432.56 L714.98 432.03 L715.53 431.53 L716.08 431.05 L716.64 430.60 L717.21 430.16 L717.79 429.78 L718.41 429.51 L719.03 429.28 L719.64 429.08 L720.25 428.91 L720.84 428.79 L721.42 428.69 L721.98 428.63 L722.52 428.61 L723.04 428.62 L723.53 428.67 L723.77 428.91 L723.99 429.24 L724.22 429.52 L724.42 429.80 L724.64 430.08 L724.89 430.42 L725.16 430.82 L725.46 431.29 L725.76 431.84 L726.07 432.45 L726.38 433.12 L726.69 433.85 L727.00 434.61 L727.32 435.40 L727.66 436.21 L728.01 437.03 L728.40 437.86 L728.83 438.69 L729.31 439.50 L729.87 440.30 L730.52 441.05 L731.28 441.72 L732.15 442.30 L733.13 442.73 L734.18 442.98 L735.42 442.98 L736.49 442.70 L737.31 442.57 L738.11 442.41 L738.89 442.23 L739.64 441.99 L740.37 441.70 L741.07 441.41 L741.76 441.11 L742.44 440.81 L743.10 440.51 L743.75 440.21 L744.39 439.91 L745.02 439.62 L744.58 438.38 L743.91 438.55 L743.24 438.71 L742.56 438.85 L741.87 438.98 L741.18 439.09 L740.48 439.18 L739.78 439.24 L739.07 439.28 L738.37 439.33 L737.67 439.39 L736.97 439.42 L736.26 439.42 L735.78 439.22 L735.50 438.85 L735.18 438.55 L734.90 438.24 L734.63 437.92 L734.35 437.57 L734.05 437.16 L733.73 436.68 L733.41 436.14 L733.09 435.53 L732.78 434.87 L732.46 434.16 L732.15 433.41 L731.83 432.64 L731.51 431.84 L731.17 431.03 L730.81 430.22 L730.41 429.41 L729.97 428.60 L729.46 427.82 L728.87 427.07 L728.16 426.39 L727.34 425.80 L726.40 425.36 L725.38 425.10 L724.23 425.09 L723.33 425.36 L722.67 425.51 L722.01 425.70 L721.36 425.92 L720.71 426.17 L720.07 426.44 L719.43 426.75 L718.79 427.08 L718.16 427.44 L717.53 427.82 L716.91 428.24 L716.24 428.59 L715.56 428.96 L714.88 429.35 L714.20 429.78 L713.52 430.24 L712.86 430.73 L712.20 431.25 L711.54 431.80 L710.90 432.38 L710.26 432.99 L709.64 433.62 L709.02 434.28 L708.42 434.96 L707.84 435.67 L707.33 436.45 L706.87 437.27 L706.45 438.11 L706.05 438.97 L705.68 439.86 L705.34 440.76 L705.06 441.67Z" fill="#8492a0" stroke="#8492a0" stroke-width="0.6" stroke-linejoin="round"/>
<path d="M761.36 426.86 L760.84 425.90 L760.14 424.99 L759.33 424.24 L758.43 423.65 L757.45 423.26 L756.45 423.06 L755.45 423.05 L754.49 423.27 L753.62 423.65 L752.83 424.11 L752.11 424.63 L751.42 425.15 L750.60 425.47 L749.81 425.90 L749.04 426.41 L748.31 427.01 L747.62 427.67 L746.98 428.40 L746.39 429.20 L745.85 430.05 L745.38 430.95 L744.98 431.90 L744.65 432.89 L744.41 433.93 L744.27 434.99 L744.24 436.07 L744.29 437.10 L744.46 438.10 L744.76 439.06 L745.24 439.97 L745.89 440.76 L746.70 441.37 L747.61 441.78 L748.54 441.96 L749.44 441.97 L750.29 441.84 L751.09 441.63 L751.85 441.35 L752.58 441.03 L753.31 440.67 L754.04 440.27 L754.77 439.83 L755.50 439.35 L756.27 438.86 L757.11 438.44 L757.95 437.96 L758.76 437.37 L759.55 436.71 L760.34 435.99 L761.10 435.24 L761.86 434.43 L762.57 433.59 L761.43 432.41 L760.58 433.09 L759.76 433.74 L758.95 434.36 L758.15 434.94 L757.37 435.50 L756.62 436.04 L755.92 436.59 L755.23 437.11 L754.50 437.47 L753.77 437.72 L753.07 437.91 L752.42 438.03 L751.81 438.06 L751.27 438.02 L750.81 437.90 L750.46 437.71 L750.23 437.47 L750.13 437.22 L750.14 437.02 L750.22 436.88 L750.29 436.80 L750.30 436.75 L750.23 436.64 L750.11 436.44 L749.96 436.10 L749.83 435.62 L749.73 435.01 L749.66 434.39 L749.64 433.76 L749.68 433.11 L749.76 432.45 L749.89 431.78 L750.08 431.11 L750.31 430.45 L750.58 429.80 L750.90 429.17 L751.25 428.57 L751.63 427.99 L752.05 427.44 L752.49 426.92 L753.11 426.73 L753.74 426.70 L754.32 426.76 L754.85 426.91 L755.30 427.08 L755.71 427.22 L756.11 427.38 L756.52 427.54 L756.98 427.75 L757.51 428.01 L758.11 428.38 L758.84 428.94Z" fill="#8492a0" stroke="#8492a0" stroke-width="0.6" stroke-linejoin="round"/>
<path d="M777.35 400.85 L776.92 401.56 L776.50 402.26 L776.08 402.96 L775.67 403.66 L775.25 404.35 L774.84 405.04 L774.42 405.73 L774.07 406.43 L773.79 407.16 L773.50 407.89 L773.21 408.61 L772.93 409.33 L772.65 410.05 L772.36 410.76 L772.08 411.47 L771.80 412.18 L771.52 412.89 L771.24 413.59 L770.96 414.29 L770.69 414.99 L770.41 415.68 L770.14 416.38 L769.86 417.07 L769.59 417.75 L769.32 418.44 L769.05 419.12 L768.78 419.81 L768.51 420.49 L768.25 421.16 L767.99 421.84 L767.72 422.51 L767.46 423.18 L767.20 423.85 L766.94 424.52 L766.69 425.19 L766.43 425.85 L766.18 426.52 L765.93 427.18 L765.68 427.84 L765.43 428.50 L765.19 429.16 L764.94 429.81 L764.70 430.47 L764.46 431.12 L764.22 431.78 L763.98 432.43 L763.75 433.08 L763.51 433.73 L763.28 434.38 L763.06 435.03 L762.83 435.67 L762.60 436.32 L762.38 436.97 L762.16 437.61 L761.94 438.26 L761.73 438.90 L761.51 439.55 L761.30 440.19 L761.09 440.84 L760.89 441.48 L760.68 442.12 L760.48 442.77 L760.28 443.41 L760.09 444.06 L759.89 444.70 L759.54 445.52 L759.30 446.59 L759.17 447.52 L759.07 448.43 L758.98 449.33 L758.92 450.20 L758.88 451.06 L758.85 451.90 L758.85 452.73 L758.86 453.54 L758.89 454.33 L758.94 455.10 L759.00 455.86 L759.07 456.61 L759.20 457.33 L759.45 458.03 L759.70 458.70 L759.96 459.36 L760.23 460.00 L760.50 460.63 L760.78 461.24 L761.07 461.84 L761.35 462.43 L761.64 463.00 L764.76 462.20 L764.74 461.57 L764.72 460.94 L764.71 460.31 L764.70 459.68 L764.70 459.05 L764.71 458.42 L764.72 457.79 L764.75 457.15 L764.78 456.51 L764.72 455.87 L764.63 455.24 L764.55 454.59 L764.47 453.93 L764.41 453.25 L764.37 452.56 L764.33 451.86 L764.31 451.13 L764.31 450.39 L764.32 449.63 L764.35 448.85 L764.39 448.04 L764.46 447.22 L764.46 446.48 L764.47 446.03 L764.65 445.40 L764.83 444.77 L765.02 444.14 L765.20 443.51 L765.39 442.88 L765.58 442.25 L765.78 441.62 L765.97 440.98 L766.17 440.35 L766.38 439.72 L766.58 439.08 L766.79 438.45 L767.00 437.81 L767.21 437.17 L767.43 436.53 L767.64 435.89 L767.86 435.25 L768.08 434.61 L768.31 433.97 L768.54 433.32 L768.76 432.68 L769.00 432.03 L769.23 431.38 L769.46 430.73 L769.70 430.08 L769.94 429.43 L770.18 428.77 L770.43 428.12 L770.67 427.46 L770.92 426.80 L771.17 426.14 L771.42 425.47 L771.68 424.81 L771.93 424.14 L772.19 423.47 L772.45 422.79 L772.71 422.12 L772.97 421.44 L773.24 420.76 L773.50 420.08 L773.77 419.40 L774.04 418.71 L774.31 418.02 L774.58 417.33 L774.86 416.64 L775.13 415.94 L775.41 415.24 L775.69 414.54 L775.97 413.83 L776.25 413.13 L776.53 412.42 L776.81 411.70 L777.10 410.98 L777.38 410.26 L777.67 409.54 L777.96 408.81 L778.25 408.08 L778.48 407.33 L778.64 406.54 L778.81 405.75 L778.98 404.96 L779.15 404.16 L779.32 403.36 L779.49 402.56 L779.65 401.75Z" fill="#8492a0" stroke="#8492a0" stroke-width="0.6" stroke-linejoin="round"/>
<path d="M816.74 406.00 L816.37 406.69 L816.01 407.38 L815.64 408.07 L815.27 408.76 L814.91 409.45 L814.54 410.14 L814.17 410.83 L813.83 411.54 L813.60 412.27 L813.37 413.01 L813.13 413.74 L812.90 414.48 L812.67 415.21 L812.44 415.95 L812.21 416.69 L811.98 417.42 L811.75 418.16 L811.52 418.89 L811.30 419.63 L811.07 420.36 L810.84 421.10 L810.62 421.83 L810.40 422.56 L810.18 423.30 L809.96 424.03 L809.74 424.76 L809.52 425.49 L809.30 426.22 L809.09 426.95 L808.87 427.68 L808.66 428.40 L808.45 429.13 L808.24 429.85 L808.03 430.58 L807.83 431.30 L807.62 432.02 L807.42 432.74 L807.22 433.46 L807.02 434.18 L806.82 434.89 L806.63 435.61 L806.44 436.32 L806.25 437.03 L806.06 437.74 L805.87 438.45 L805.69 439.16 L805.51 439.86 L805.33 440.57 L805.15 441.27 L804.98 441.97 L804.81 442.66 L804.64 443.36 L804.47 444.05 L804.31 444.74 L804.15 445.43 L804.09 446.14 L804.06 446.85 L804.04 447.56 L804.02 448.27 L804.00 448.97 L803.98 449.67 L803.96 450.36 L803.95 451.05 L803.95 451.74 L806.65 452.26 L806.90 451.63 L807.16 451.00 L807.41 450.37 L807.67 449.74 L807.93 449.10 L808.20 448.46 L808.47 447.82 L808.74 447.18 L808.99 446.53 L809.14 445.86 L809.29 445.18 L809.45 444.50 L809.61 443.82 L809.78 443.13 L809.94 442.45 L810.11 441.76 L810.28 441.07 L810.45 440.37 L810.63 439.68 L810.81 438.98 L810.99 438.28 L811.17 437.58 L811.36 436.88 L811.55 436.17 L811.74 435.46 L811.93 434.76 L812.12 434.05 L812.32 433.33 L812.52 432.62 L812.72 431.91 L812.92 431.19 L813.13 430.47 L813.33 429.75 L813.54 429.03 L813.75 428.31 L813.96 427.59 L814.17 426.87 L814.38 426.14 L814.60 425.42 L814.82 424.69 L815.03 423.96 L815.25 423.23 L815.47 422.51 L815.70 421.78 L815.92 421.05 L816.14 420.32 L816.37 419.58 L816.59 418.85 L816.82 418.12 L817.05 417.39 L817.27 416.66 L817.50 415.92 L817.73 415.19 L817.96 414.46 L818.19 413.73 L818.43 412.99 L818.55 412.23 L818.65 411.45 L818.75 410.68 L818.85 409.90 L818.95 409.13 L819.06 408.35 L819.16 407.58 L819.26 406.80Z" fill="#8492a0" stroke="#8492a0" stroke-width="0.6" stroke-linejoin="round"/>
<path d="M802.80 415.51 L802.92 414.98 L803.06 414.53 L803.22 414.11 L803.40 413.71 L803.60 413.32 L803.81 412.96 L804.05 412.60 L804.31 412.27 L804.58 411.94 L804.88 411.62 L805.16 411.29 L805.42 410.92 L805.71 410.55 L806.03 410.18 L806.38 409.81 L806.77 409.45 L807.19 409.09 L807.63 408.73 L808.12 408.39 L808.63 408.05 L809.19 407.76 L809.78 407.48 L810.39 407.21 L811.03 406.95 L811.69 406.70 L812.38 406.45 L813.09 406.22 L813.82 406.00 L814.57 405.79 L815.35 405.59 L816.15 405.40 L816.97 405.22 L817.81 405.06 L818.66 404.91 L819.54 404.75 L820.41 404.44 L821.30 404.15 L822.22 403.85 L823.15 403.57 L824.11 403.30 L825.10 403.03 L824.90 400.17 L823.85 400.05 L822.81 399.95 L821.77 399.87 L820.74 399.81 L819.73 399.78 L818.72 399.76 L817.76 399.92 L816.81 400.11 L815.88 400.32 L814.97 400.55 L814.08 400.79 L813.21 401.04 L812.35 401.32 L811.52 401.60 L810.71 401.91 L809.92 402.23 L809.15 402.56 L808.41 402.92 L807.69 403.29 L806.99 403.67 L806.31 404.07 L805.64 404.45 L804.98 404.85 L804.35 405.26 L803.75 405.70 L803.16 406.15 L802.60 406.62 L802.07 407.11 L801.56 407.63 L801.08 408.17 L800.69 408.77 L800.37 409.41 L800.10 410.07 L799.87 410.74 L799.68 411.41 L799.54 412.10 L799.46 412.78 L799.42 413.48 L799.43 414.17 L799.49 414.86 L799.60 415.49Z" fill="#8492a0" stroke="#8492a0" stroke-width="0.6" stroke-linejoin="round"/>
<path d="M822.05 402.51 L823.02 402.59 L823.94 402.71 L824.83 402.86 L825.67 403.04 L826.47 403.25 L827.23 403.48 L827.95 403.70 L828.65 403.87 L829.32 404.06 L829.96 404.28 L830.56 404.51 L831.13 404.77 L831.68 405.04 L832.19 405.33 L832.67 405.63 L833.13 405.95 L833.56 406.28 L833.97 406.63 L834.36 406.99 L834.72 407.36 L835.06 407.75 L835.39 408.15 L835.69 408.57 L835.98 409.01 L836.25 409.45 L836.50 409.92 L836.74 410.40 L836.96 410.90 L837.16 411.41 L837.34 411.95 L837.51 412.50 L837.65 413.06 L837.78 413.65 L837.89 414.25 L837.98 414.87 L838.06 415.50 L838.11 416.15 L838.14 416.81 L838.15 417.48 L838.14 418.17 L838.11 418.87 L838.06 419.59 L838.00 420.31 L837.91 421.05 L837.80 421.79 L837.67 422.55 L837.52 423.31 L837.35 424.08 L837.16 424.85 L836.95 425.64 L836.73 426.41 L836.47 427.22 L836.17 428.05 L835.85 428.87 L835.52 429.69 L835.17 430.49 L834.80 431.29 L834.42 432.08 L834.02 432.87 L833.61 433.64 L833.19 434.40 L832.75 435.15 L832.31 435.89 L831.85 436.61 L831.37 437.33 L830.89 438.03 L830.40 438.71 L829.91 439.38 L829.40 440.03 L828.88 440.67 L828.36 441.29 L827.84 441.89 L827.30 442.47 L826.77 443.03 L826.23 443.58 L825.68 444.10 L825.14 444.61 L824.59 445.09 L824.04 445.55 L823.49 445.99 L822.94 446.41 L822.39 446.80 L821.84 447.17 L821.27 447.47 L820.70 447.73 L820.14 447.96 L819.58 448.16 L819.03 448.32 L818.49 448.46 L817.97 448.56 L817.46 448.63 L816.96 448.67 L816.48 448.68 L816.02 448.66 L815.58 448.61 L815.27 448.50 L814.49 448.26 L813.85 447.96 L813.25 447.74 L812.71 447.48 L812.22 447.18 L811.76 446.85 L811.34 446.47 L810.96 446.05 L810.63 445.61 L810.33 445.10 L808.07 445.90 L808.20 446.60 L808.44 447.39 L808.77 448.18 L809.23 448.97 L809.81 449.74 L810.53 450.46 L811.38 451.10 L812.37 451.64 L813.52 451.94 L814.73 452.10 L815.50 452.05 L816.15 451.99 L816.79 451.89 L817.44 451.76 L818.07 451.59 L818.71 451.40 L819.34 451.17 L819.96 450.91 L820.59 450.63 L821.21 450.32 L821.83 449.99 L822.45 449.63 L823.07 449.25 L823.71 448.90 L824.36 448.51 L825.00 448.10 L825.64 447.66 L826.28 447.20 L826.91 446.71 L827.54 446.20 L828.16 445.66 L828.78 445.11 L829.39 444.53 L830.00 443.93 L830.60 443.31 L831.19 442.67 L831.78 442.01 L832.35 441.33 L832.92 440.63 L833.48 439.92 L834.02 439.19 L834.56 438.45 L835.08 437.69 L835.59 436.92 L836.09 436.13 L836.58 435.33 L837.05 434.51 L837.51 433.68 L837.95 432.85 L838.38 432.00 L838.79 431.14 L839.18 430.27 L839.56 429.39 L839.91 428.50 L840.27 427.59 L840.56 426.72 L840.82 425.87 L841.06 425.02 L841.28 424.17 L841.48 423.33 L841.66 422.49 L841.82 421.66 L841.95 420.83 L842.06 420.00 L842.15 419.18 L842.22 418.37 L842.26 417.57 L842.28 416.77 L842.28 415.97 L842.24 415.19 L842.19 414.41 L842.11 413.65 L842.00 412.89 L841.86 412.14 L841.70 411.40 L841.50 410.68 L841.28 409.97 L841.02 409.27 L840.74 408.59 L840.42 407.92 L840.07 407.27 L839.69 406.64 L839.27 406.03 L838.82 405.44 L838.34 404.88 L837.83 404.34 L837.28 403.83 L836.71 403.34 L836.10 402.89 L835.47 402.47 L834.81 402.07 L834.12 401.71 L833.41 401.38 L832.67 401.08 L831.90 400.82 L831.11 400.58 L830.30 400.38 L829.46 400.21 L828.60 400.07 L827.71 400.03 L826.79 400.06 L825.86 400.13 L824.90 400.23 L823.94 400.35 L822.95 400.51 L821.95 400.69Z" fill="#8492a0" stroke="#8492a0" stroke-width="0.6" stroke-linejoin="round"/>
<path d="M847.51 424.77 L847.24 425.67 L846.97 426.52 L846.68 427.34 L846.37 428.15 L846.10 428.94 L846.00 429.75 L845.88 430.55 L845.74 431.35 L845.60 432.13 L845.44 432.91 L845.27 433.67 L845.10 434.43 L844.92 435.18 L844.75 435.91 L844.58 436.64 L844.45 437.37 L844.47 438.12 L844.51 438.85 L844.57 439.57 L844.65 440.27 L844.77 440.96 L844.93 441.63 L845.15 442.21 L848.25 441.79 L848.33 441.31 L848.42 440.86 L848.55 440.40 L848.70 439.90 L848.89 439.38 L849.10 438.83 L849.35 438.26 L849.48 437.62 L849.61 436.95 L849.75 436.25 L849.91 435.52 L850.08 434.77 L850.26 433.98 L850.45 433.17 L850.64 432.34 L850.83 431.48 L851.01 430.60 L851.18 429.69 L851.15 428.74 L851.05 427.77 L850.91 426.78 L850.73 425.79 L850.49 424.83Z" fill="#8492a0" stroke="#8492a0" stroke-width="0.6" stroke-linejoin="round"/>
<path d="M851.74 429.40 L852.17 428.79 L852.55 428.27 L852.90 427.80 L853.24 427.38 L853.56 427.00 L853.88 426.63 L854.36 426.58 L854.81 426.61 L855.23 426.70 L855.64 426.81 L856.03 426.95 L856.45 427.12 L856.88 427.30 L857.35 427.52 L857.84 427.77 L858.38 428.06 L858.95 428.39 L859.55 428.76 L860.19 429.18 L860.85 429.65 L861.60 430.08 L862.45 430.48 L863.34 430.92 L864.26 431.39 L865.23 431.91 L866.77 430.09 L866.07 429.21 L865.38 428.36 L864.68 427.56 L863.98 426.80 L863.23 426.18 L862.42 425.67 L861.63 425.22 L860.84 424.81 L860.06 424.47 L859.28 424.19 L858.50 423.97 L857.72 423.83 L856.96 423.78 L856.21 423.82 L855.48 423.96 L854.80 424.19 L854.18 424.52 L853.62 424.93 L853.13 425.38 L852.52 425.66 L851.95 426.06 L851.43 426.56 L850.97 427.16 L850.57 427.84 L850.26 428.60Z" fill="#8492a0" stroke="#8492a0" stroke-width="0.6" stroke-linejoin="round"/>
<path d="M859.71 428.20 L860.35 428.73 L860.95 429.28 L861.56 429.80 L862.24 430.20 L862.92 430.59 L863.60 430.98 L864.29 431.36 L864.99 431.72 L865.71 432.02 L866.49 432.17 L867.27 432.26 L868.02 432.31 L868.38 431.09 L867.79 430.73 L867.23 430.34 L866.69 429.90 L866.10 429.55 L865.47 429.21 L864.82 428.84 L864.16 428.46 L863.48 428.06 L862.77 427.66 L861.97 427.40 L861.13 427.19 L860.29 427.00Z" fill="#8492a0" stroke="#8492a0" stroke-width="0.6" stroke-linejoin="round"/>
<path d="M875.44 424.97 L874.76 425.11 L874.08 425.35 L873.43 425.67 L872.78 425.99 L872.11 426.32 L871.45 426.70 L870.82 427.14 L870.20 427.63 L869.61 428.19 L869.10 428.82 L868.62 429.50 L868.18 430.21 L867.78 430.96 L867.41 431.73 L867.08 432.54 L866.78 433.37 L866.53 434.22 L866.31 435.09 L866.12 435.97 L865.98 436.87 L865.84 437.87 L865.84 439.10 L866.03 440.30 L866.44 441.40 L867.08 442.36 L867.90 443.13 L868.88 443.65 L869.93 443.90 L871.00 443.88 L872.00 443.64 L872.65 443.25 L873.20 442.91 L873.74 442.56 L874.33 442.26 L874.91 441.89 L875.49 441.47 L876.05 440.98 L876.60 440.45 L877.13 439.86 L877.65 439.24 L878.16 438.57 L878.65 437.87 L879.13 437.13 L879.60 436.36 L880.04 435.56 L880.48 434.74 L880.89 433.89 L881.28 433.02 L881.66 432.13 L882.01 431.22 L882.35 430.30 L882.66 429.36 L883.03 428.31 L883.23 427.07 L883.32 426.00 L883.36 425.03 L883.35 424.14 L883.29 423.34 L883.18 422.62 L883.03 421.97 L879.35 422.14 L879.41 423.38 L879.57 424.34 L879.78 425.27 L880.04 426.19 L880.37 427.08 L880.78 427.93 L881.29 428.74 L881.93 429.46 L882.70 430.06 L883.59 430.51 L884.52 430.76 L885.50 430.97 L886.39 431.17 L887.27 431.25 L888.13 431.30 L888.96 431.33 L889.76 431.34 L890.53 431.33 L891.28 431.30 L892.00 431.25 L892.69 431.18 L892.71 429.62 L892.06 429.53 L891.41 429.40 L890.74 429.25 L890.05 429.07 L889.34 428.87 L888.62 428.63 L887.87 428.37 L887.09 428.09 L886.27 427.88 L885.48 427.64 L885.12 427.40 L884.86 427.14 L884.61 426.85 L884.36 426.51 L884.09 426.08 L883.84 425.57 L883.60 424.98 L883.38 424.31 L883.19 423.58 L883.04 422.80 L882.85 422.26 L879.46 423.15 L879.56 423.43 L879.67 423.85 L879.75 424.41 L879.81 425.09 L879.83 425.88 L879.81 426.77 L879.77 427.69 L879.62 428.46 L879.37 429.32 L879.09 430.18 L878.80 431.03 L878.49 431.87 L878.17 432.68 L877.82 433.48 L877.47 434.25 L877.10 435.00 L876.72 435.72 L876.34 436.42 L875.94 437.08 L875.55 437.70 L875.14 438.29 L874.74 438.84 L874.34 439.35 L873.94 439.82 L873.55 440.25 L873.16 440.64 L872.78 440.98 L872.34 441.17 L871.91 441.25 L871.60 441.16 L871.09 441.03 L870.73 440.80 L870.45 440.55 L870.24 440.29 L870.03 440.01 L869.82 439.67 L869.62 439.23 L869.45 438.67 L869.36 437.93 L869.37 437.25 L869.45 436.48 L869.55 435.73 L869.68 434.98 L869.84 434.25 L870.03 433.54 L870.25 432.84 L870.49 432.17 L870.75 431.52 L871.04 430.90 L871.35 430.30 L871.68 429.74 L871.99 429.16 L872.32 428.62 L872.69 428.10 L873.09 427.62 L873.53 427.18 L874.03 426.84 L874.58 426.60 L875.15 426.41 L875.76 426.23Z" fill="#8492a0" stroke="#8492a0" stroke-width="0.6" stroke-linejoin="round"/>
<path d="M897.68 419.11 L897.32 419.77 L896.96 420.44 L896.59 421.11 L896.23 421.77 L895.87 422.44 L895.51 423.10 L895.15 423.76 L894.79 424.43 L894.54 425.13 L894.30 425.83 L894.05 426.53 L893.81 427.24 L893.57 427.94 L893.32 428.64 L893.08 429.34 L892.84 430.04 L892.60 430.73 L892.36 431.43 L892.12 432.13 L891.88 432.83 L891.64 433.52 L891.40 434.22 L891.16 434.92 L890.93 435.61 L890.69 436.31 L890.45 437.00 L890.22 437.70 L889.99 438.39 L889.75 439.08 L889.52 439.78 L889.29 440.47 L889.06 441.16 L888.83 441.85 L888.60 442.54 L888.37 443.23 L888.14 443.92 L887.91 444.61 L887.69 445.30 L887.46 445.99 L887.24 446.68 L887.01 447.37 L886.79 448.06 L886.57 448.75 L886.35 449.44 L886.13 450.12 L885.91 450.81 L885.69 451.50 L885.48 452.18 L885.26 452.87 L885.05 453.55 L884.83 454.24 L884.62 454.93 L884.41 455.61 L884.20 456.29 L883.99 456.98 L883.78 457.66 L883.57 458.35 L883.37 459.03 L883.16 459.71 L882.96 460.40 L882.76 461.08 L882.61 461.78 L882.52 462.49 L882.44 463.21 L882.35 463.92 L882.26 464.63 L882.18 465.34 L882.10 466.06 L882.02 466.77 L881.94 467.48 L884.26 468.12 L884.56 467.48 L884.86 466.83 L885.16 466.19 L885.47 465.55 L885.77 464.90 L886.08 464.26 L886.38 463.62 L886.69 462.97 L886.94 462.31 L887.14 461.64 L887.34 460.96 L887.54 460.28 L887.75 459.60 L887.95 458.92 L888.16 458.25 L888.36 457.57 L888.57 456.89 L888.78 456.21 L888.99 455.53 L889.20 454.85 L889.41 454.17 L889.62 453.49 L889.84 452.80 L890.05 452.12 L890.27 451.44 L890.49 450.76 L890.70 450.07 L890.92 449.39 L891.14 448.71 L891.36 448.02 L891.59 447.34 L891.81 446.65 L892.03 445.96 L892.26 445.28 L892.48 444.59 L892.71 443.90 L892.94 443.22 L893.16 442.53 L893.39 441.84 L893.62 441.15 L893.85 440.46 L894.09 439.77 L894.32 439.08 L894.55 438.39 L894.78 437.69 L895.02 437.00 L895.25 436.31 L895.49 435.62 L895.73 434.92 L895.96 434.23 L896.20 433.53 L896.44 432.84 L896.68 432.14 L896.92 431.44 L897.16 430.75 L897.40 430.05 L897.64 429.35 L897.89 428.65 L898.13 427.95 L898.37 427.25 L898.62 426.55 L898.86 425.85 L898.99 425.11 L899.12 424.36 L899.25 423.62 L899.38 422.88 L899.52 422.13 L899.65 421.39 L899.78 420.64 L899.92 419.89Z" fill="#8492a0" stroke="#8492a0" stroke-width="0.6" stroke-linejoin="round"/>
<path d="M895.25 438.33 L895.60 437.71 L895.97 437.09 L896.36 436.48 L896.78 435.87 L897.23 435.27 L897.69 434.67 L898.18 434.08 L898.67 433.49 L899.13 432.87 L899.61 432.26 L900.12 431.66 L900.64 431.09 L901.18 430.52 L901.73 429.98 L902.30 429.46 L902.88 428.96 L903.47 428.48 L904.07 428.03 L904.68 427.60 L905.33 427.27 L905.99 426.99 L906.65 426.75 L907.30 426.55 L907.95 426.40 L908.59 426.29 L909.21 426.23 L909.74 426.27 L910.37 426.44 L910.82 426.67 L911.08 426.92 L911.23 427.14 L911.34 427.33 L911.46 427.54 L911.59 427.83 L911.71 428.22 L911.77 428.72 L911.76 429.31 L911.67 429.99 L911.49 430.71 L911.21 431.48 L910.82 432.28 L910.48 432.88 L910.09 433.49 L909.67 434.10 L909.22 434.70 L908.75 435.29 L908.25 435.88 L907.74 436.45 L907.20 437.00 L906.64 437.53 L906.08 438.04 L905.50 438.53 L904.91 438.99 L904.31 439.43 L903.69 439.80 L903.05 440.08 L902.40 440.31 L901.77 440.50 L901.15 440.64 L900.61 440.65 L899.89 440.62 L899.14 440.62 L898.39 440.58 L897.64 440.48 L896.91 440.34 L896.23 440.15 L895.60 439.93 L895.00 439.66 L894.00 441.34 L894.62 441.79 L895.36 442.21 L896.18 442.59 L897.06 442.90 L898.00 443.13 L898.97 443.27 L899.97 443.31 L900.99 443.15 L901.78 442.83 L902.50 442.53 L903.20 442.19 L903.90 441.82 L904.58 441.41 L905.28 441.01 L905.99 440.60 L906.69 440.16 L907.37 439.68 L908.05 439.18 L908.70 438.64 L909.34 438.09 L909.96 437.51 L910.55 436.91 L911.13 436.30 L911.68 435.67 L912.20 435.03 L912.70 434.38 L913.18 433.72 L913.77 432.80 L914.28 431.86 L914.70 430.91 L915.02 429.94 L915.22 428.97 L915.29 427.98 L915.21 427.00 L914.94 426.03 L914.44 425.14 L913.71 424.39 L912.81 423.85 L911.81 423.55 L910.76 423.45 L909.66 423.53 L908.81 423.75 L908.05 423.97 L907.31 424.22 L906.58 424.52 L905.86 424.85 L905.15 425.22 L904.45 425.62 L903.76 426.04 L903.04 426.43 L902.34 426.86 L901.64 427.32 L900.96 427.81 L900.30 428.33 L899.65 428.88 L899.01 429.45 L898.39 430.04 L897.80 430.65 L897.22 431.27 L896.66 431.92 L896.18 432.61 L895.73 433.32 L895.32 434.04 L894.94 434.77 L894.59 435.50 L894.27 436.23 L893.98 436.96 L893.75 437.67Z" fill="#8492a0" stroke="#8492a0" stroke-width="0.6" stroke-linejoin="round"/>
<path d="M964.44 407.46 L964.13 407.98 L963.82 408.51 L963.50 409.05 L963.18 409.60 L962.85 410.16 L962.52 410.73 L962.19 411.31 L961.85 411.89 L961.50 412.49 L961.22 413.11 L960.98 413.76 L960.73 414.42 L960.49 415.09 L960.24 415.76 L959.99 416.45 L959.74 417.13 L959.49 417.83 L959.23 418.53 L958.97 419.24 L958.71 419.95 L958.45 420.67 L958.19 421.40 L957.93 422.13 L957.66 422.86 L957.40 423.60 L957.13 424.35 L956.86 425.10 L956.59 425.85 L956.32 426.60 L956.05 427.36 L955.78 428.12 L955.51 428.89 L955.23 429.66 L954.96 430.43 L954.69 431.20 L954.41 431.97 L954.14 432.75 L953.86 433.52 L953.59 434.30 L953.31 435.08 L953.04 435.86 L952.76 436.64 L952.49 437.42 L952.21 438.20 L951.94 438.97 L951.67 439.75 L951.39 440.53 L951.12 441.30 L950.85 442.08 L950.58 442.85 L950.31 443.62 L950.04 444.39 L949.77 445.15 L949.50 445.91 L949.24 446.67 L948.97 447.43 L948.71 448.18 L948.45 448.93 L948.29 449.71 L948.16 450.49 L948.03 451.27 L947.91 452.04 L947.78 452.81 L947.65 453.58 L947.53 454.33 L947.40 455.08 L949.80 455.92 L950.17 455.25 L950.54 454.58 L950.91 453.91 L951.29 453.23 L951.67 452.54 L952.06 451.85 L952.44 451.15 L952.80 450.45 L953.06 449.70 L953.33 448.95 L953.59 448.19 L953.86 447.43 L954.12 446.67 L954.39 445.91 L954.66 445.14 L954.93 444.37 L955.20 443.60 L955.47 442.83 L955.74 442.05 L956.01 441.28 L956.28 440.50 L956.56 439.72 L956.83 438.94 L957.10 438.17 L957.38 437.39 L957.65 436.61 L957.93 435.83 L958.20 435.06 L958.47 434.28 L958.75 433.51 L959.02 432.73 L959.29 431.96 L959.57 431.19 L959.84 430.43 L960.11 429.66 L960.38 428.90 L960.65 428.14 L960.92 427.39 L961.18 426.64 L961.45 425.89 L961.72 425.15 L961.98 424.41 L962.24 423.68 L962.50 422.95 L962.76 422.23 L963.02 421.51 L963.28 420.80 L963.53 420.09 L963.79 419.39 L964.04 418.70 L964.29 418.01 L964.53 417.33 L964.78 416.66 L965.02 415.99 L965.26 415.34 L965.50 414.69 L965.69 414.03 L965.81 413.36 L965.93 412.70 L966.06 412.04 L966.18 411.40 L966.30 410.77 L966.42 410.15 L966.53 409.53 L966.65 408.93 L966.76 408.34Z" fill="#8492a0" stroke="#8492a0" stroke-width="0.6" stroke-linejoin="round"/>
<path d="M959.39 414.07 L959.84 413.48 L960.28 412.94 L960.71 412.43 L961.03 411.87 L961.39 411.33 L961.78 410.81 L962.22 410.32 L962.69 409.85 L963.22 409.42 L963.82 409.06 L964.46 408.73 L965.14 408.38 L964.86 407.62 L964.08 407.81 L963.34 408.10 L962.65 408.45 L961.96 408.80 L961.30 409.19 L960.67 409.64 L960.07 410.14 L959.52 410.68 L959.00 411.28 L958.66 412.00 L958.39 412.75 L958.21 413.53Z" fill="#8492a0" stroke="#8492a0" stroke-width="0.6" stroke-linejoin="round"/>
<path d="M945.41 424.48 L944.34 424.72 L943.29 425.23 L942.26 426.03 L941.68 427.34 L941.87 428.91 L942.99 430.21 L944.58 430.73 L945.60 430.34 L946.11 430.30 L946.63 430.25 L947.17 430.21 L947.74 430.16 L948.32 430.11 L948.91 430.06 L949.53 430.00 L950.16 429.95 L950.81 429.89 L951.47 429.83 L952.15 429.78 L952.85 429.71 L953.55 429.65 L954.27 429.59 L955.01 429.53 L955.75 429.46 L956.51 429.40 L957.28 429.33 L958.06 429.26 L958.85 429.19 L959.66 429.13 L960.47 429.06 L961.29 428.99 L962.11 428.92 L962.95 428.85 L963.79 428.78 L964.64 428.70 L965.50 428.63 L966.36 428.56 L967.23 428.49 L968.10 428.35 L968.97 428.18 L969.84 428.02 L970.72 427.86 L971.60 427.69 L972.48 427.53 L973.36 427.36 L973.24 425.84 L972.34 425.81 L971.44 425.79 L970.55 425.77 L969.65 425.75 L968.77 425.73 L967.88 425.72 L967.00 425.72 L966.13 425.79 L965.27 425.86 L964.41 425.94 L963.56 426.01 L962.72 426.08 L961.88 426.15 L961.05 426.22 L960.23 426.29 L959.42 426.36 L958.62 426.43 L957.82 426.50 L957.04 426.57 L956.27 426.64 L955.51 426.70 L954.77 426.77 L954.03 426.83 L953.31 426.89 L952.61 426.96 L951.91 427.02 L951.23 427.08 L950.57 427.13 L949.92 427.19 L949.29 427.24 L948.68 427.30 L948.08 427.35 L947.50 427.40 L946.94 427.44 L946.39 427.49 L945.87 427.53 L945.37 427.58 L945.42 427.27 L945.23 427.03 L945.27 427.07 L945.04 427.12 L944.68 426.88 L944.45 426.33 L944.77 425.92 L945.59 425.92Z" fill="#8492a0" stroke="#8492a0" stroke-width="0.6" stroke-linejoin="round"/>
<path d="M985.51 423.69 L984.56 423.32 L983.54 423.12 L982.53 423.05 L981.56 423.13 L980.63 423.33 L979.76 423.64 L978.96 424.05 L978.25 424.58 L977.48 424.96 L976.69 425.33 L975.94 425.78 L975.24 426.30 L974.57 426.89 L973.97 427.53 L973.41 428.22 L972.92 428.96 L972.49 429.74 L972.12 430.56 L971.82 431.40 L971.57 432.35 L971.45 433.64 L971.50 434.92 L971.73 436.16 L972.12 437.32 L972.69 438.38 L973.43 439.32 L974.32 440.09 L975.35 440.65 L976.48 440.95 L977.64 440.96 L978.73 440.67 L979.69 440.14 L980.48 439.43 L981.23 439.05 L981.91 438.67 L982.57 438.23 L983.20 437.75 L983.81 437.22 L984.40 436.65 L984.97 436.05 L985.52 435.42 L986.05 434.77 L986.55 434.11 L987.04 433.42 L987.52 432.73 L987.97 432.03 L988.41 431.33 L988.84 430.63 L989.25 429.93 L989.64 429.24 L990.02 428.57 L990.39 427.90 L990.74 427.26 L988.64 427.95 L986.80 426.66 L986.86 427.43 L986.91 428.21 L986.97 429.01 L987.04 429.82 L987.11 430.64 L987.20 431.47 L987.30 432.30 L987.42 433.14 L987.57 433.98 L987.75 434.82 L987.95 435.66 L988.20 436.50 L988.49 437.33 L988.83 438.16 L989.23 438.97 L989.68 439.76 L990.21 440.52 L990.80 441.25 L991.46 441.94 L992.71 442.75 L994.12 442.90 L994.90 443.02 L995.68 443.11 L996.46 443.17 L997.23 443.19 L998.00 443.19 L998.76 443.16 L999.52 443.11 L1000.28 443.03 L1001.03 442.93 L1001.78 442.81 L1002.53 442.68 L1003.28 442.53 L1004.03 442.36 L1004.77 442.12 L1005.51 441.85 L1006.25 441.57 L1006.99 441.28 L1007.74 440.98 L1008.49 440.67 L1009.25 440.36 L1010.01 440.04 L1009.59 438.56 L1008.78 438.70 L1007.98 438.82 L1007.20 438.93 L1006.43 439.02 L1005.67 439.09 L1004.92 439.15 L1004.19 439.18 L1003.47 439.22 L1002.78 439.30 L1002.09 439.35 L1001.42 439.39 L1000.76 439.40 L1000.11 439.39 L999.46 439.36 L998.83 439.30 L998.21 439.22 L997.60 439.12 L997.00 438.99 L996.41 438.85 L995.82 438.68 L995.25 438.48 L995.29 438.25 L995.45 438.03 L995.12 437.62 L994.81 437.19 L994.52 436.74 L994.25 436.27 L993.99 435.77 L993.75 435.24 L993.52 434.68 L993.32 434.09 L993.13 433.47 L992.96 432.83 L992.81 432.16 L992.68 431.47 L992.56 430.76 L992.46 430.04 L992.37 429.30 L992.30 428.55 L992.23 427.80 L992.17 427.03 L992.11 426.27 L990.16 423.45 L987.36 425.39 L987.00 426.04 L986.64 426.70 L986.28 427.37 L985.91 428.05 L985.53 428.73 L985.16 429.42 L984.77 430.10 L984.39 430.78 L984.00 431.45 L983.60 432.11 L983.20 432.76 L982.80 433.39 L982.39 434.00 L981.98 434.59 L981.57 435.16 L981.16 435.71 L980.74 436.23 L980.32 436.72 L979.90 437.19 L979.52 437.57 L978.93 437.39 L978.50 437.10 L978.24 436.76 L978.08 436.44 L977.97 436.16 L977.84 435.90 L977.69 435.64 L977.50 435.33 L977.30 434.96 L977.09 434.52 L976.89 434.00 L976.73 433.38 L976.63 432.65 L976.56 432.24 L976.56 431.73 L976.61 431.19 L976.71 430.64 L976.85 430.07 L977.04 429.50 L977.27 428.93 L977.55 428.36 L977.88 427.81 L978.26 427.27 L978.68 426.75 L979.21 426.33 L979.88 426.20 L980.53 426.07 L981.18 425.98 L981.85 425.93 L982.53 425.92 L983.25 425.94 L984.01 426.01 L984.89 426.11Z" fill="#8492a0" stroke="#8492a0" stroke-width="0.6" stroke-linejoin="round"/>
<path d="M1024.86 401.39 L1024.45 401.99 L1024.04 402.60 L1023.63 403.22 L1023.21 403.84 L1022.80 404.46 L1022.38 405.09 L1021.97 405.72 L1021.55 406.36 L1021.23 407.03 L1020.94 407.73 L1020.64 408.42 L1020.35 409.12 L1020.05 409.82 L1019.76 410.52 L1019.47 411.23 L1019.18 411.93 L1018.89 412.64 L1018.61 413.36 L1018.32 414.07 L1018.04 414.78 L1017.76 415.50 L1017.48 416.22 L1017.20 416.94 L1016.93 417.66 L1016.66 418.38 L1016.39 419.10 L1016.12 419.82 L1015.86 420.55 L1015.59 421.27 L1015.34 421.99 L1015.08 422.72 L1014.83 423.44 L1014.58 424.16 L1014.33 424.89 L1014.08 425.61 L1013.84 426.33 L1013.61 427.05 L1013.37 427.77 L1013.14 428.49 L1012.92 429.21 L1012.69 429.93 L1012.48 430.64 L1012.31 431.37 L1012.23 432.12 L1012.16 432.87 L1012.09 433.61 L1012.03 434.35 L1011.97 435.09 L1011.92 435.82 L1011.87 436.54 L1011.83 437.26 L1014.57 437.94 L1014.87 437.29 L1015.16 436.64 L1015.46 435.99 L1015.77 435.34 L1016.08 434.69 L1016.39 434.04 L1016.71 433.39 L1017.04 432.73 L1017.28 432.05 L1017.47 431.35 L1017.68 430.65 L1017.88 429.95 L1018.09 429.25 L1018.31 428.54 L1018.53 427.84 L1018.75 427.13 L1018.98 426.42 L1019.20 425.71 L1019.44 425.01 L1019.67 424.30 L1019.91 423.58 L1020.16 422.87 L1020.40 422.16 L1020.65 421.45 L1020.90 420.74 L1021.15 420.03 L1021.41 419.32 L1021.67 418.61 L1021.93 417.90 L1022.19 417.20 L1022.46 416.49 L1022.73 415.78 L1023.00 415.08 L1023.27 414.38 L1023.54 413.68 L1023.82 412.98 L1024.10 412.28 L1024.37 411.59 L1024.65 410.90 L1024.93 410.21 L1025.22 409.52 L1025.50 408.84 L1025.76 408.15 L1025.92 407.42 L1026.09 406.69 L1026.26 405.97 L1026.44 405.25 L1026.61 404.54 L1026.79 403.83 L1026.96 403.12 L1027.14 402.41Z" fill="#8492a0" stroke="#8492a0" stroke-width="0.6" stroke-linejoin="round"/>
<path d="M1014.36 437.91 L1014.72 437.05 L1015.08 436.26 L1015.45 435.53 L1015.84 434.83 L1016.23 434.18 L1016.64 433.56 L1017.03 432.95 L1017.39 432.34 L1017.77 431.75 L1018.18 431.19 L1018.61 430.66 L1019.07 430.15 L1019.55 429.68 L1020.06 429.25 L1020.68 429.03 L1021.30 428.86 L1021.91 428.74 L1022.52 428.65 L1023.11 428.61 L1023.69 428.60 L1024.25 428.64 L1024.79 428.71 L1025.31 428.81 L1025.64 429.03 L1025.88 429.33 L1026.04 429.60 L1026.13 429.82 L1026.20 430.00 L1026.29 430.19 L1026.42 430.41 L1026.57 430.71 L1026.72 431.09 L1026.84 431.56 L1026.93 432.10 L1026.98 432.70 L1026.98 433.36 L1026.92 434.06 L1026.82 434.78 L1026.66 435.53 L1026.45 436.29 L1026.20 437.06 L1025.91 437.82 L1025.57 438.58 L1025.20 439.31 L1024.83 440.03 L1024.50 440.60 L1024.06 441.16 L1023.58 441.70 L1023.07 442.20 L1022.53 442.68 L1021.89 443.01 L1021.21 443.23 L1020.52 443.40 L1019.84 443.53 L1019.15 443.61 L1018.48 443.65 L1017.81 443.64 L1017.15 443.59 L1016.51 443.50 L1015.89 443.36 L1015.28 443.27 L1014.66 443.18 L1014.05 443.06 L1013.43 442.90 L1012.80 442.72 L1012.17 442.49 L1011.53 442.22 L1010.83 441.87 L1009.17 444.13 L1009.79 444.77 L1010.52 445.35 L1011.29 445.86 L1012.10 446.30 L1012.94 446.65 L1013.80 446.93 L1014.68 447.12 L1015.57 447.20 L1016.46 447.14 L1017.34 447.02 L1018.19 446.84 L1019.02 446.60 L1019.83 446.32 L1020.61 445.98 L1021.37 445.60 L1022.10 445.18 L1022.80 444.72 L1023.51 444.29 L1024.26 443.92 L1025.00 443.51 L1025.72 443.05 L1026.42 442.54 L1027.17 441.97 L1027.90 441.22 L1028.54 440.42 L1029.14 439.58 L1029.67 438.71 L1030.16 437.81 L1030.59 436.89 L1030.96 435.96 L1031.28 435.01 L1031.53 434.05 L1031.72 433.09 L1031.84 432.13 L1031.88 431.16 L1031.82 430.18 L1031.65 429.22 L1031.35 428.26 L1030.89 427.35 L1030.25 426.53 L1029.44 425.84 L1028.49 425.34 L1027.46 425.05 L1026.36 424.97 L1025.43 425.11 L1024.68 425.21 L1023.93 425.36 L1023.20 425.56 L1022.48 425.81 L1021.77 426.10 L1021.09 426.44 L1020.42 426.81 L1019.78 427.23 L1019.15 427.69 L1018.44 428.00 L1017.73 428.37 L1017.03 428.79 L1016.34 429.27 L1015.68 429.80 L1015.03 430.39 L1014.40 431.03 L1013.87 431.78 L1013.42 432.59 L1013.01 433.45 L1012.67 434.36 L1012.39 435.31 L1012.17 436.30 L1012.04 437.29Z" fill="#8492a0" stroke="#8492a0" stroke-width="0.6" stroke-linejoin="round"/>
<path d="M1051.31 397.96 L1050.85 398.56 L1050.39 399.18 L1049.92 399.79 L1049.45 400.42 L1048.98 401.05 L1048.51 401.69 L1048.04 402.33 L1047.59 402.99 L1047.23 403.70 L1046.88 404.41 L1046.53 405.13 L1046.18 405.86 L1045.83 406.58 L1045.49 407.31 L1045.14 408.05 L1044.81 408.79 L1044.47 409.53 L1044.15 410.27 L1043.82 411.02 L1043.50 411.76 L1043.18 412.51 L1042.87 413.26 L1042.56 414.01 L1042.26 414.77 L1041.96 415.52 L1041.67 416.27 L1041.38 417.03 L1041.10 417.78 L1040.82 418.53 L1040.55 419.28 L1040.29 420.04 L1040.03 420.78 L1039.78 421.53 L1039.53 422.28 L1039.29 423.02 L1039.06 423.76 L1038.84 424.50 L1038.62 425.24 L1038.41 425.97 L1038.21 426.70 L1038.02 427.42 L1037.83 428.14 L1037.65 428.86 L1037.48 429.57 L1037.32 430.28 L1037.17 430.98 L1037.03 431.68 L1036.90 432.38 L1036.77 433.07 L1036.66 433.75 L1036.55 434.42 L1036.46 435.10 L1036.35 435.81 L1036.23 437.03 L1036.18 438.23 L1036.21 439.39 L1036.33 440.50 L1036.54 441.58 L1036.87 442.61 L1037.33 443.57 L1037.92 444.46 L1038.65 445.23 L1039.50 445.85 L1040.44 446.30 L1041.43 446.57 L1042.43 446.65 L1043.40 446.59 L1044.35 446.40 L1045.26 446.12 L1045.82 445.81 L1046.28 445.64 L1046.75 445.47 L1047.22 445.28 L1047.70 445.07 L1048.17 444.85 L1048.66 444.61 L1049.14 444.36 L1049.64 444.10 L1050.14 443.81 L1050.65 443.51 L1051.18 443.19 L1051.71 442.85 L1052.28 442.51 L1052.88 442.19 L1053.50 441.85 L1054.14 441.47 L1054.80 441.07 L1055.47 440.64 L1056.17 440.18 L1056.89 439.69 L1057.58 439.10 L1058.30 438.47 L1059.03 437.80 L1059.78 437.10 L1060.56 436.35 L1061.36 435.56 L1060.44 434.44 L1059.51 435.06 L1058.63 435.65 L1057.78 436.21 L1056.97 436.74 L1056.19 437.24 L1055.45 437.72 L1054.78 438.24 L1054.13 438.72 L1053.52 439.18 L1052.92 439.61 L1052.34 440.02 L1051.79 440.40 L1051.25 440.77 L1050.71 441.06 L1050.17 441.31 L1049.65 441.54 L1049.14 441.74 L1048.65 441.92 L1048.17 442.08 L1047.70 442.22 L1047.24 442.35 L1046.80 442.46 L1046.36 442.56 L1045.92 442.64 L1045.50 442.72 L1045.07 442.78 L1044.74 442.68 L1044.19 442.54 L1043.74 442.33 L1043.41 442.07 L1043.18 441.80 L1043.03 441.55 L1042.93 441.32 L1042.83 441.11 L1042.71 440.89 L1042.55 440.63 L1042.38 440.30 L1042.19 439.88 L1042.00 439.35 L1041.84 438.72 L1041.72 437.99 L1041.65 437.15 L1041.65 436.19 L1041.66 435.65 L1041.71 435.05 L1041.78 434.44 L1041.85 433.82 L1041.93 433.20 L1042.02 432.56 L1042.12 431.91 L1042.23 431.26 L1042.35 430.60 L1042.48 429.93 L1042.62 429.26 L1042.77 428.58 L1042.93 427.89 L1043.09 427.20 L1043.27 426.50 L1043.45 425.80 L1043.64 425.09 L1043.84 424.38 L1044.04 423.67 L1044.25 422.95 L1044.47 422.23 L1044.70 421.51 L1044.94 420.78 L1045.18 420.05 L1045.42 419.32 L1045.67 418.59 L1045.93 417.86 L1046.20 417.12 L1046.47 416.39 L1046.74 415.66 L1047.02 414.92 L1047.31 414.19 L1047.60 413.46 L1047.89 412.73 L1048.19 412.00 L1048.50 411.27 L1048.80 410.54 L1049.11 409.82 L1049.43 409.10 L1049.75 408.38 L1050.07 407.67 L1050.39 406.96 L1050.72 406.25 L1051.05 405.55 L1051.38 404.85 L1051.62 404.11 L1051.84 403.37 L1052.08 402.63 L1052.31 401.90 L1052.55 401.18 L1052.79 400.46 L1053.04 399.74 L1053.29 399.04Z" fill="#8492a0" stroke="#8492a0" stroke-width="0.6" stroke-linejoin="round"/>
<path d="M1061.14 435.49 L1061.90 435.17 L1062.67 434.82 L1063.45 434.44 L1064.23 434.04 L1065.04 433.67 L1065.84 433.28 L1066.65 432.89 L1067.41 432.42 L1068.15 431.94 L1068.86 431.45 L1069.56 430.93 L1070.23 430.39 L1070.87 429.83 L1071.47 429.22 L1072.04 428.57 L1072.56 427.86 L1073.45 426.29 L1072.86 424.37 L1071.86 423.38 L1070.67 422.80 L1069.45 422.59 L1068.29 422.64 L1067.19 422.87 L1066.16 423.24 L1065.19 423.75 L1064.30 424.37 L1063.36 424.88 L1062.34 425.38 L1061.28 426.06 L1060.51 426.82 L1060.03 427.60 L1059.60 428.43 L1059.24 429.30 L1058.95 430.21 L1058.71 431.15 L1058.55 432.11 L1058.46 433.09 L1058.45 434.08 L1058.52 435.08 L1058.68 436.08 L1058.94 437.07 L1059.31 438.04 L1059.80 438.97 L1060.42 439.85 L1061.17 440.64 L1062.04 441.32 L1063.02 441.88 L1064.15 442.29 L1065.10 442.36 L1065.82 442.40 L1066.53 442.41 L1067.24 442.37 L1067.95 442.29 L1068.66 442.18 L1069.36 442.04 L1070.06 441.87 L1070.77 441.67 L1071.47 441.44 L1072.18 441.20 L1072.88 440.93 L1073.59 440.63 L1074.30 440.32 L1075.01 439.98 L1075.73 439.62 L1076.44 439.25 L1077.16 438.86 L1077.87 438.44 L1078.59 438.01 L1079.31 437.58 L1080.05 437.17 L1080.80 436.75 L1081.54 436.31 L1082.28 435.85 L1083.01 435.37 L1083.71 434.83 L1084.39 434.27 L1085.06 433.70 L1085.72 433.12 L1086.37 432.52 L1087.01 431.92 L1087.62 431.30 L1086.78 430.30 L1086.08 430.81 L1085.38 431.30 L1084.67 431.80 L1083.96 432.28 L1083.25 432.76 L1082.54 433.23 L1081.83 433.69 L1081.15 434.19 L1080.47 434.68 L1079.79 435.15 L1079.10 435.61 L1078.42 436.06 L1077.71 436.44 L1076.99 436.79 L1076.28 437.11 L1075.57 437.42 L1074.87 437.70 L1074.17 437.95 L1073.48 438.18 L1072.80 438.38 L1072.13 438.55 L1071.47 438.68 L1070.82 438.79 L1070.19 438.87 L1069.58 438.91 L1068.99 438.93 L1068.43 438.90 L1067.88 438.85 L1067.37 438.76 L1066.88 438.65 L1066.43 438.50 L1066.01 438.33 L1065.85 438.11 L1065.48 437.75 L1065.13 437.39 L1064.82 437.02 L1064.54 436.64 L1064.29 436.24 L1064.05 435.81 L1063.83 435.34 L1063.64 434.82 L1063.47 434.26 L1063.35 433.67 L1063.26 433.04 L1063.21 432.40 L1063.20 431.74 L1063.24 431.07 L1063.31 430.41 L1063.42 429.75 L1063.56 429.11 L1063.74 428.49 L1063.72 427.94 L1064.00 427.22 L1064.49 426.54 L1065.18 426.10 L1065.99 425.99 L1066.75 426.00 L1067.43 426.13 L1067.99 426.36 L1068.36 426.67 L1068.54 426.98 L1068.53 427.19 L1068.48 427.27 L1068.55 426.71 L1069.00 426.36 L1068.93 426.85 L1068.77 427.38 L1068.52 427.94 L1068.18 428.50 L1067.76 429.06 L1067.28 429.62 L1066.74 430.17 L1066.14 430.70 L1065.51 431.23 L1064.88 431.78 L1064.22 432.31 L1063.53 432.82 L1062.80 433.26 L1062.08 433.69 L1061.36 434.11 L1060.66 434.51Z" fill="#8492a0" stroke="#8492a0" stroke-width="0.6" stroke-linejoin="round"/>
<path d="M1122.94 394.35 L1122.61 394.91 L1122.28 395.47 L1121.94 396.04 L1121.61 396.61 L1121.27 397.18 L1120.93 397.76 L1120.58 398.34 L1120.24 398.93 L1119.89 399.53 L1119.63 400.16 L1119.39 400.80 L1119.15 401.45 L1118.91 402.10 L1118.67 402.75 L1118.42 403.41 L1118.18 404.07 L1117.94 404.74 L1117.69 405.41 L1117.45 406.09 L1117.20 406.77 L1116.96 407.45 L1116.71 408.13 L1116.47 408.82 L1116.22 409.51 L1115.98 410.21 L1115.74 410.91 L1115.49 411.61 L1115.25 412.31 L1115.00 413.02 L1114.76 413.73 L1114.52 414.45 L1114.27 415.16 L1114.03 415.88 L1113.79 416.61 L1113.55 417.33 L1113.31 418.06 L1113.07 418.79 L1112.83 419.52 L1112.59 420.25 L1112.36 420.99 L1112.12 421.73 L1111.89 422.47 L1111.65 423.21 L1111.42 423.95 L1111.19 424.70 L1110.96 425.45 L1110.73 426.20 L1110.50 426.95 L1110.28 427.70 L1110.05 428.45 L1109.83 429.21 L1109.61 429.97 L1109.39 430.73 L1109.17 431.48 L1108.96 432.24 L1108.74 433.01 L1108.53 433.77 L1108.32 434.53 L1108.11 435.29 L1107.99 436.08 L1107.93 436.88 L1107.86 437.68 L1107.80 438.49 L1107.75 439.29 L1107.69 440.09 L1107.64 440.89 L1107.59 441.68 L1110.21 442.32 L1110.53 441.59 L1110.85 440.87 L1111.18 440.15 L1111.51 439.43 L1111.83 438.71 L1112.16 437.99 L1112.50 437.27 L1112.78 436.54 L1112.98 435.79 L1113.18 435.03 L1113.38 434.28 L1113.58 433.53 L1113.79 432.78 L1114.00 432.03 L1114.21 431.28 L1114.42 430.53 L1114.63 429.79 L1114.84 429.04 L1115.06 428.30 L1115.28 427.56 L1115.50 426.82 L1115.72 426.08 L1115.94 425.34 L1116.16 424.60 L1116.39 423.87 L1116.61 423.14 L1116.84 422.40 L1117.07 421.68 L1117.30 420.95 L1117.53 420.22 L1117.76 419.50 L1117.99 418.78 L1118.22 418.06 L1118.46 417.35 L1118.69 416.64 L1118.92 415.93 L1119.16 415.22 L1119.39 414.51 L1119.63 413.81 L1119.87 413.11 L1120.10 412.42 L1120.34 411.72 L1120.58 411.03 L1120.82 410.35 L1121.05 409.66 L1121.29 408.98 L1121.53 408.31 L1121.77 407.63 L1122.01 406.96 L1122.24 406.30 L1122.48 405.64 L1122.72 404.98 L1122.95 404.32 L1123.19 403.67 L1123.43 403.03 L1123.66 402.38 L1123.90 401.75 L1124.12 401.11 L1124.24 400.44 L1124.37 399.77 L1124.49 399.11 L1124.62 398.45 L1124.75 397.80 L1124.88 397.16 L1125.00 396.51 L1125.13 395.88 L1125.26 395.25Z" fill="#8492a0" stroke="#8492a0" stroke-width="0.6" stroke-linejoin="round"/>
<path d="M1121.08 399.58 L1121.72 398.91 L1122.22 398.30 L1122.57 397.65 L1122.94 397.07 L1123.33 396.54 L1123.71 396.04 L1124.14 395.64 L1124.65 395.35 L1124.35 394.65 L1123.74 394.83 L1123.06 395.08 L1122.35 395.40 L1121.69 395.88 L1121.05 396.47 L1120.45 397.16 L1120.07 398.04 L1119.92 399.02Z" fill="#8492a0" stroke="#8492a0" stroke-width="0.6" stroke-linejoin="round"/>
<path d="M1109.80 442.48 L1110.24 441.85 L1110.68 441.24 L1111.13 440.63 L1111.59 440.05 L1112.05 439.47 L1112.52 438.90 L1113.00 438.35 L1113.47 437.80 L1113.89 437.22 L1114.33 436.65 L1114.78 436.10 L1115.24 435.57 L1115.72 435.05 L1116.20 434.54 L1116.70 434.06 L1117.21 433.59 L1117.74 433.14 L1118.27 432.72 L1118.84 432.34 L1119.47 432.09 L1120.10 431.87 L1120.74 431.68 L1121.37 431.52 L1122.01 431.40 L1122.65 431.31 L1123.17 431.43 L1123.87 431.65 L1124.48 431.88 L1124.95 432.15 L1125.30 432.44 L1125.57 432.73 L1125.81 433.01 L1126.06 433.31 L1126.32 433.65 L1126.60 434.04 L1126.90 434.49 L1127.22 435.00 L1127.56 435.56 L1127.93 436.17 L1128.32 436.82 L1128.98 437.74 L1129.98 438.54 L1130.89 439.08 L1131.83 439.48 L1132.79 439.77 L1133.75 439.95 L1134.71 440.03 L1135.65 440.04 L1136.58 439.97 L1137.48 439.79 L1138.36 439.52 L1139.21 439.20 L1140.04 438.86 L1140.83 438.48 L1141.60 438.08 L1142.34 437.66 L1143.04 437.25 L1142.56 436.15 L1141.81 436.38 L1141.05 436.54 L1140.28 436.64 L1139.51 436.69 L1138.75 436.68 L1138.01 436.61 L1137.30 436.47 L1136.62 436.33 L1135.99 436.19 L1135.39 436.00 L1134.85 435.76 L1134.36 435.49 L1133.92 435.18 L1133.54 434.86 L1133.19 434.51 L1133.02 434.26 L1132.90 433.97 L1132.56 433.39 L1132.20 432.79 L1131.81 432.15 L1131.39 431.50 L1130.92 430.83 L1130.37 430.17 L1129.73 429.54 L1128.99 428.97 L1128.13 428.49 L1127.18 428.14 L1126.17 427.93 L1125.11 427.87 L1124.02 427.93 L1122.83 428.17 L1121.97 428.60 L1121.25 428.89 L1120.55 429.21 L1119.87 429.55 L1119.21 429.92 L1118.57 430.32 L1117.94 430.74 L1117.27 431.09 L1116.60 431.45 L1115.93 431.83 L1115.28 432.24 L1114.64 432.69 L1114.01 433.15 L1113.40 433.65 L1112.80 434.17 L1112.21 434.71 L1111.64 435.27 L1111.08 435.85 L1110.60 436.50 L1110.15 437.18 L1109.73 437.87 L1109.34 438.58 L1108.96 439.30 L1108.61 440.03 L1108.29 440.78 L1108.00 441.52Z" fill="#8492a0" stroke="#8492a0" stroke-width="0.6" stroke-linejoin="round"/>
<path d="M1143.03 437.26 L1143.77 437.01 L1144.51 436.72 L1145.26 436.40 L1146.02 436.05 L1146.77 435.68 L1147.51 435.29 L1148.29 434.94 L1149.04 434.55 L1149.77 434.12 L1150.48 433.68 L1151.17 433.21 L1151.84 432.73 L1152.49 432.22 L1153.11 431.70 L1153.70 431.15 L1154.26 430.56 L1154.79 429.93 L1155.82 428.67 L1155.80 426.91 L1155.39 425.67 L1154.71 424.58 L1153.83 423.72 L1152.81 423.11 L1151.72 422.75 L1150.64 422.62 L1149.58 422.66 L1148.58 422.87 L1147.63 423.20 L1146.76 423.64 L1145.95 424.19 L1145.16 424.71 L1144.11 425.07 L1143.23 425.67 L1142.61 426.36 L1142.06 427.13 L1141.58 427.95 L1141.19 428.82 L1140.87 429.73 L1140.62 430.67 L1140.45 431.63 L1140.36 432.61 L1140.35 433.59 L1140.41 434.58 L1140.57 435.56 L1140.81 436.54 L1141.14 437.49 L1141.57 438.41 L1142.10 439.28 L1142.74 440.10 L1143.49 440.84 L1144.33 441.48 L1145.27 442.00 L1146.42 442.38 L1147.48 442.39 L1148.25 442.38 L1149.02 442.32 L1149.77 442.21 L1150.51 442.07 L1151.24 441.89 L1151.97 441.68 L1152.69 441.44 L1153.41 441.18 L1154.14 440.90 L1154.86 440.60 L1155.59 440.28 L1156.32 439.95 L1157.05 439.60 L1157.79 439.24 L1158.54 438.87 L1159.29 438.49 L1160.01 438.05 L1160.74 437.61 L1161.48 437.16 L1162.21 436.71 L1162.95 436.27 L1163.70 435.82 L1164.44 435.38 L1163.96 434.42 L1163.16 434.76 L1162.36 435.09 L1161.56 435.43 L1160.77 435.76 L1159.98 436.08 L1159.19 436.39 L1158.41 436.68 L1157.67 437.02 L1156.93 437.33 L1156.20 437.63 L1155.48 437.90 L1154.76 438.14 L1154.06 438.36 L1153.37 438.54 L1152.69 438.69 L1152.04 438.80 L1151.40 438.88 L1150.78 438.91 L1150.19 438.90 L1149.62 438.85 L1149.09 438.76 L1148.60 438.63 L1148.13 438.46 L1147.98 438.22 L1147.71 437.87 L1147.35 437.52 L1147.03 437.15 L1146.73 436.77 L1146.45 436.35 L1146.19 435.91 L1145.94 435.43 L1145.72 434.92 L1145.53 434.37 L1145.37 433.79 L1145.25 433.18 L1145.16 432.56 L1145.11 431.92 L1145.10 431.28 L1145.13 430.63 L1145.19 429.99 L1145.30 429.35 L1145.44 428.73 L1145.61 428.12 L1145.83 427.53 L1145.89 426.93 L1146.18 426.31 L1146.82 426.04 L1147.53 425.99 L1148.19 426.03 L1148.79 426.16 L1149.31 426.37 L1149.74 426.63 L1150.06 426.93 L1150.27 427.22 L1150.41 427.48 L1150.53 427.71 L1150.67 427.96 L1150.85 428.29 L1151.18 428.33 L1151.65 428.22 L1151.49 428.73 L1151.25 429.26 L1150.95 429.80 L1150.58 430.34 L1150.14 430.88 L1149.66 431.41 L1149.13 431.92 L1148.56 432.43 L1147.95 432.91 L1147.33 433.41 L1146.70 433.90 L1146.02 434.32 L1145.33 434.71 L1144.63 435.09 L1143.94 435.46 L1143.25 435.80 L1142.57 436.14Z" fill="#8492a0" stroke="#8492a0" stroke-width="0.6" stroke-linejoin="round"/>
<path d="M1168.27 423.89 L1167.91 424.58 L1167.54 425.30 L1167.18 426.02 L1166.82 426.76 L1166.46 427.50 L1166.14 428.26 L1165.98 429.06 L1165.82 429.85 L1165.67 430.65 L1165.52 431.45 L1165.38 432.25 L1165.25 433.04 L1165.13 433.83 L1165.01 434.62 L1164.90 435.39 L1164.80 436.16 L1164.70 436.93 L1164.72 437.69 L1164.82 438.44 L1164.92 439.18 L1165.03 439.90 L1165.15 440.60 L1165.27 441.28 L1165.40 441.94 L1168.20 442.06 L1168.39 441.45 L1168.58 440.82 L1168.79 440.17 L1169.01 439.52 L1169.23 438.85 L1169.47 438.16 L1169.64 437.46 L1169.71 436.74 L1169.79 436.01 L1169.88 435.26 L1169.97 434.51 L1170.07 433.76 L1170.18 433.00 L1170.29 432.24 L1170.41 431.47 L1170.54 430.71 L1170.67 429.95 L1170.81 429.19 L1170.80 428.40 L1170.77 427.61 L1170.74 426.83 L1170.73 426.05 L1170.72 425.28 L1170.73 424.51Z" fill="#8492a0" stroke="#8492a0" stroke-width="0.6" stroke-linejoin="round"/>
<path d="M1170.53 425.76 L1171.27 425.73 L1172.01 425.78 L1172.77 425.87 L1173.52 426.02 L1174.26 426.23 L1174.97 426.43 L1175.67 426.61 L1176.32 426.83 L1176.92 427.11 L1177.46 427.42 L1177.83 427.74 L1178.26 428.20 L1178.86 428.75 L1179.46 429.31 L1180.07 429.87 L1180.69 430.42 L1181.43 430.84 L1182.18 431.24 L1182.93 431.60 L1183.69 431.91 L1184.46 432.14 L1185.15 432.29 L1186.05 430.31 L1185.60 429.94 L1185.23 429.51 L1184.85 429.02 L1184.46 428.48 L1184.05 427.88 L1183.62 427.24 L1183.05 426.68 L1182.43 426.10 L1181.77 425.51 L1181.08 424.91 L1180.17 424.26 L1179.13 423.83 L1178.18 423.54 L1177.22 423.34 L1176.27 423.23 L1175.32 423.17 L1174.39 423.24 L1173.48 423.43 L1172.61 423.65 L1171.78 423.90 L1170.99 424.17 L1170.27 424.44Z" fill="#8492a0" stroke="#8492a0" stroke-width="0.6" stroke-linejoin="round"/>
<path d="M1185.24 432.44 L1185.84 432.70 L1186.51 432.92 L1187.22 433.10 L1187.95 433.23 L1188.71 433.31 L1189.48 433.34 L1190.28 433.32 L1191.09 433.24 L1191.90 433.10 L1192.71 432.84 L1193.51 432.52 L1194.31 432.17 L1195.10 431.76 L1195.89 431.31 L1196.66 430.80 L1197.48 430.35 L1198.33 429.90 L1200.15 429.32 L1200.91 427.22 L1200.63 425.98 L1200.04 424.87 L1199.21 423.98 L1198.22 423.35 L1197.16 422.96 L1196.09 422.78 L1195.03 422.77 L1194.00 422.91 L1193.00 423.19 L1192.05 423.59 L1191.16 424.10 L1190.33 424.71 L1189.27 425.11 L1188.35 425.59 L1187.69 426.22 L1187.11 426.94 L1186.61 427.73 L1186.18 428.57 L1185.82 429.47 L1185.54 430.41 L1185.34 431.38 L1185.21 432.37 L1185.15 433.38 L1185.18 434.40 L1185.28 435.42 L1185.47 436.44 L1185.75 437.45 L1186.13 438.44 L1186.61 439.40 L1187.19 440.32 L1187.89 441.17 L1188.69 441.94 L1189.59 442.61 L1190.85 443.19 L1192.07 443.16 L1192.79 443.16 L1193.50 443.11 L1194.21 443.03 L1194.92 442.91 L1195.62 442.76 L1196.33 442.59 L1197.03 442.38 L1197.73 442.15 L1198.44 441.90 L1199.14 441.63 L1199.85 441.33 L1200.56 441.01 L1201.27 440.68 L1201.98 440.32 L1202.69 439.95 L1203.41 439.56 L1204.12 439.15 L1204.84 438.73 L1205.55 438.30 L1206.28 437.89 L1207.02 437.47 L1207.76 437.04 L1208.49 436.60 L1209.22 436.14 L1209.94 435.67 L1210.62 435.14 L1211.29 434.59 L1211.96 434.04 L1212.61 433.49 L1213.25 432.93 L1213.88 432.36 L1214.49 431.79 L1213.71 430.81 L1213.02 431.28 L1212.33 431.74 L1211.63 432.20 L1210.93 432.66 L1210.22 433.11 L1209.51 433.56 L1208.80 434.01 L1208.11 434.49 L1207.43 434.97 L1206.74 435.44 L1206.06 435.90 L1205.37 436.35 L1204.67 436.77 L1203.96 437.14 L1203.24 437.48 L1202.53 437.81 L1201.82 438.12 L1201.12 438.40 L1200.42 438.66 L1199.73 438.89 L1199.05 439.09 L1198.38 439.27 L1197.72 439.42 L1197.07 439.53 L1196.44 439.61 L1195.83 439.66 L1195.24 439.68 L1194.67 439.66 L1194.13 439.61 L1193.61 439.52 L1193.13 439.40 L1192.67 439.26 L1192.75 439.01 L1192.56 438.63 L1192.17 438.21 L1191.81 437.77 L1191.48 437.31 L1191.17 436.81 L1190.90 436.28 L1190.65 435.72 L1190.43 435.12 L1190.25 434.49 L1190.10 433.84 L1190.00 433.18 L1189.93 432.50 L1189.91 431.83 L1189.92 431.15 L1189.98 430.49 L1190.06 429.85 L1190.18 429.22 L1190.33 428.62 L1190.50 428.04 L1190.70 427.48 L1190.73 426.89 L1191.21 426.32 L1191.99 426.19 L1192.74 426.15 L1193.43 426.22 L1194.06 426.36 L1194.60 426.58 L1195.03 426.85 L1195.35 427.14 L1195.55 427.42 L1195.65 427.65 L1195.71 427.82 L1195.80 427.96 L1195.94 428.16 L1196.85 427.68 L1197.16 428.22 L1196.49 428.77 L1195.78 429.21 L1195.01 429.50 L1194.26 429.74 L1193.51 429.93 L1192.78 430.07 L1192.07 430.17 L1191.37 430.23 L1190.71 430.32 L1190.06 430.39 L1189.43 430.43 L1188.81 430.45 L1188.21 430.44 L1187.63 430.41 L1187.07 430.35 L1186.52 430.26 L1185.96 430.16Z" fill="#8492a0" stroke="#8492a0" stroke-width="0.6" stroke-linejoin="round"/>
<path d="M1216.7 442.5 L1220.3000000000002 440.3" stroke="#8492a0" stroke-width="3.8" stroke-linecap="round"/>
<path d="M1236.3 442.5 L1239.9 440.3" stroke="#8492a0" stroke-width="3.8" stroke-linecap="round"/>
<path d="M1255.8999999999999 442.5 L1259.5 440.3" stroke="#8492a0" stroke-width="3.8" stroke-linecap="round"/>
</svg>
<div class="t" style="left:1820.60px;top:18.92px;font-size:16.4px;line-height:16.4px;color:#dedede;font-weight:normal;font-style:normal;transform:scaleX(0.955);transform-origin:0 0;">Preview</div>
<div class="t" style="left:501.00px;top:20.71px;font-size:17.0px;line-height:17.0px;color:#6a6a6a;font-weight:normal;font-style:normal;transform:scaleY(1.08);transform-origin:0 14.39px;">100%</div>
<div class="t" style="left:35.60px;top:74.20px;font-size:18.9px;line-height:18.9px;color:#606060;font-weight:normal;font-style:normal;transform:scaleY(1.05);transform-origin:0 16px;">DataSource</div>
<div class="t" style="left:172.00px;top:75.52px;font-size:17.1px;line-height:17.1px;color:#333333;font-weight:normal;font-style:normal;transform:scaleY(1.1);transform-origin:0 14.48px;">DataSource1</div>
<div class="t" style="left:480.60px;top:73.22px;font-size:19.7px;line-height:19.7px;color:#606060;font-weight:normal;font-style:normal;">Name</div>
<div class="t" style="left:569.20px;top:75.59px;font-size:16.9px;line-height:16.9px;color:#333333;font-weight:normal;font-style:normal;transform:scaleY(1.1);transform-origin:0 14.31px;">DataSet1</div>
<div class="t" style="left:1049.20px;top:72.75px;font-size:19.2px;line-height:19.2px;color:#606060;font-weight:normal;font-style:normal;transform:scaleY(1.08);transform-origin:0 16.25px;">Code</div>
<div class="t" style="left:1695.60px;top:73.92px;font-size:17.7px;line-height:17.7px;color:#ffffff;font-weight:normal;font-style:normal;">Finish</div>
<div class="t" style="left:1811.80px;top:74.42px;font-size:17.1px;line-height:17.1px;color:#333333;font-weight:normal;font-style:normal;transform:scaleY(1.06);transform-origin:0 14.48px;">Cancel</div>
<div class="t" style="left:30.40px;top:139.10px;font-size:17.6px;line-height:17.6px;color:#959595;font-weight:normal;font-style:italic;transform:scaleY(1.08);transform-origin:0 14.9px;">Search</div>
<div class="t" style="left:965.40px;top:288.01px;font-size:18.3px;line-height:18.3px;color:#2a2a2a;font-weight:normal;font-style:normal;-webkit-text-stroke:0.45px #2a2a2a;">SalesPerson</div>
<div class="t" style="left:367.20px;top:665.77px;font-size:17.75px;line-height:17.75px;color:#222222;font-weight:normal;font-style:normal;-webkit-text-stroke:0.45px #222222;">Data Preview</div>
<div class="t" style="left:1027.40px;top:780.74px;font-size:21.1px;line-height:21.1px;color:#3a3a3a;font-weight:normal;font-style:normal;transform:scaleY(1.05);transform-origin:0 17.86px;">No records to display</div>
<div id="tree"><div class="inner">
<svg width="1907" height="882" viewBox="0 0 1907 882">
<path d="M62 200.00 L70.8 208.30 L62 216.50" stroke="#484848" stroke-width="1.1" fill="none"/>
<circle cx="94.6" cy="198.70" r="1.55" fill="#555"/>
<circle cx="94.6" cy="203.90" r="1.55" fill="#555"/>
<circle cx="94.6" cy="209.10" r="1.55" fill="#555"/>
<circle cx="94.6" cy="214.30" r="1.55" fill="#555"/>
<circle cx="100.1" cy="198.70" r="1.55" fill="#555"/>
<circle cx="100.1" cy="203.90" r="1.55" fill="#555"/>
<circle cx="100.1" cy="209.10" r="1.55" fill="#555"/>
<circle cx="100.1" cy="214.30" r="1.55" fill="#555"/>
<rect x="111.3" y="196.00" width="23.4" height="19.7" fill="#5f5f5f"/>
<rect x="113.5" y="201.80" width="4.70" height="5.00" fill="#fff"/>
<rect x="113.5" y="208.90" width="4.70" height="5.00" fill="#fff"/>
<rect x="120.8" y="201.80" width="4.70" height="5.00" fill="#fff"/>
<rect x="120.8" y="208.90" width="4.70" height="5.00" fill="#fff"/>
<rect x="127.9" y="201.80" width="5.00" height="5.00" fill="#fff"/>
<rect x="127.9" y="208.90" width="5.00" height="5.00" fill="#fff"/>
<rect x="124.5" y="205.20" width="11.8" height="12.3" rx="2" fill="#5f5f5f"/>
<path d="M126.6 210.00 L130 213.10 L133.6 209.50" stroke="#fff" stroke-width="1.3" fill="none"/>
<path d="M62 238.52 L70.8 246.82 L62 255.02" stroke="#484848" stroke-width="1.1" fill="none"/>
<circle cx="94.6" cy="237.22" r="1.55" fill="#555"/>
<circle cx="94.6" cy="242.42" r="1.55" fill="#555"/>
<circle cx="94.6" cy="247.62" r="1.55" fill="#555"/>
<circle cx="94.6" cy="252.82" r="1.55" fill="#555"/>
<circle cx="100.1" cy="237.22" r="1.55" fill="#555"/>
<circle cx="100.1" cy="242.42" r="1.55" fill="#555"/>
<circle cx="100.1" cy="247.62" r="1.55" fill="#555"/>
<circle cx="100.1" cy="252.82" r="1.55" fill="#555"/>
<rect x="111.3" y="234.52" width="23.4" height="19.7" fill="#5f5f5f"/>
<rect x="113.5" y="240.32" width="4.70" height="5.00" fill="#fff"/>
<rect x="113.5" y="247.42" width="4.70" height="5.00" fill="#fff"/>
<rect x="120.8" y="240.32" width="4.70" height="5.00" fill="#fff"/>
<rect x="120.8" y="247.42" width="4.70" height="5.00" fill="#fff"/>
<rect x="127.9" y="240.32" width="5.00" height="5.00" fill="#fff"/>
<rect x="127.9" y="247.42" width="5.00" height="5.00" fill="#fff"/>
<rect x="124.5" y="243.72" width="11.8" height="12.3" rx="2" fill="#5f5f5f"/>
<path d="M126.6 248.52 L130 251.62 L133.6 248.02" stroke="#fff" stroke-width="1.3" fill="none"/>
<path d="M62 277.04 L70.8 285.34 L62 293.54" stroke="#484848" stroke-width="1.1" fill="none"/>
<circle cx="94.6" cy="275.74" r="1.55" fill="#555"/>
<circle cx="94.6" cy="280.94" r="1.55" fill="#555"/>
<circle cx="94.6" cy="286.14" r="1.55" fill="#555"/>
<circle cx="94.6" cy="291.34" r="1.55" fill="#555"/>
<circle cx="100.1" cy="275.74" r="1.55" fill="#555"/>
<circle cx="100.1" cy="280.94" r="1.55" fill="#555"/>
<circle cx="100.1" cy="286.14" r="1.55" fill="#555"/>
<circle cx="100.1" cy="291.34" r="1.55" fill="#555"/>
<rect x="111.3" y="273.04" width="23.4" height="19.7" fill="#5f5f5f"/>
<rect x="113.5" y="278.84" width="4.70" height="5.00" fill="#fff"/>
<rect x="113.5" y="285.94" width="4.70" height="5.00" fill="#fff"/>
<rect x="120.8" y="278.84" width="4.70" height="5.00" fill="#fff"/>
<rect x="120.8" y="285.94" width="4.70" height="5.00" fill="#fff"/>
<rect x="127.9" y="278.84" width="5.00" height="5.00" fill="#fff"/>
<rect x="127.9" y="285.94" width="5.00" height="5.00" fill="#fff"/>
<rect x="124.5" y="282.24" width="11.8" height="12.3" rx="2" fill="#5f5f5f"/>
<path d="M126.6 287.04 L130 290.14 L133.6 286.54" stroke="#fff" stroke-width="1.3" fill="none"/>
<path d="M62 315.56 L70.8 323.86 L62 332.06" stroke="#484848" stroke-width="1.1" fill="none"/>
<circle cx="94.6" cy="314.26" r="1.55" fill="#555"/>
<circle cx="94.6" cy="319.46" r="1.55" fill="#555"/>
<circle cx="94.6" cy="324.66" r="1.55" fill="#555"/>
<circle cx="94.6" cy="329.86" r="1.55" fill="#555"/>
<circle cx="100.1" cy="314.26" r="1.55" fill="#555"/>
<circle cx="100.1" cy="319.46" r="1.55" fill="#555"/>
<circle cx="100.1" cy="324.66" r="1.55" fill="#555"/>
<circle cx="100.1" cy="329.86" r="1.55" fill="#555"/>
<rect x="111.3" y="311.56" width="23.4" height="19.7" fill="#5f5f5f"/>
<rect x="113.5" y="317.36" width="4.70" height="5.00" fill="#fff"/>
<rect x="113.5" y="324.46" width="4.70" height="5.00" fill="#fff"/>
<rect x="120.8" y="317.36" width="4.70" height="5.00" fill="#fff"/>
<rect x="120.8" y="324.46" width="4.70" height="5.00" fill="#fff"/>
<rect x="127.9" y="317.36" width="5.00" height="5.00" fill="#fff"/>
<rect x="127.9" y="324.46" width="5.00" height="5.00" fill="#fff"/>
<rect x="124.5" y="320.76" width="11.8" height="12.3" rx="2" fill="#5f5f5f"/>
<path d="M126.6 325.56 L130 328.66 L133.6 325.06" stroke="#fff" stroke-width="1.3" fill="none"/>
<path d="M62 354.08 L70.8 362.38 L62 370.58" stroke="#484848" stroke-width="1.1" fill="none"/>
<circle cx="94.6" cy="352.78" r="1.55" fill="#555"/>
<circle cx="94.6" cy="357.98" r="1.55" fill="#555"/>
<circle cx="94.6" cy="363.18" r="1.55" fill="#555"/>
<circle cx="94.6" cy="368.38" r="1.55" fill="#555"/>
<circle cx="100.1" cy="352.78" r="1.55" fill="#555"/>
<circle cx="100.1" cy="357.98" r="1.55" fill="#555"/>
<circle cx="100.1" cy="363.18" r="1.55" fill="#555"/>
<circle cx="100.1" cy="368.38" r="1.55" fill="#555"/>
<rect x="111.3" y="350.08" width="23.4" height="19.7" fill="#5f5f5f"/>
<rect x="113.5" y="355.88" width="4.70" height="5.00" fill="#fff"/>
<rect x="113.5" y="362.98" width="4.70" height="5.00" fill="#fff"/>
<rect x="120.8" y="355.88" width="4.70" height="5.00" fill="#fff"/>
<rect x="120.8" y="362.98" width="4.70" height="5.00" fill="#fff"/>
<rect x="127.9" y="355.88" width="5.00" height="5.00" fill="#fff"/>
<rect x="127.9" y="362.98" width="5.00" height="5.00" fill="#fff"/>
<rect x="124.5" y="359.28" width="11.8" height="12.3" rx="2" fill="#5f5f5f"/>
<path d="M126.6 364.08 L130 367.18 L133.6 363.58" stroke="#fff" stroke-width="1.3" fill="none"/>
<path d="M62 392.60 L70.8 400.90 L62 409.10" stroke="#484848" stroke-width="1.1" fill="none"/>
<circle cx="94.6" cy="391.30" r="1.55" fill="#555"/>
<circle cx="94.6" cy="396.50" r="1.55" fill="#555"/>
<circle cx="94.6" cy="401.70" r="1.55" fill="#555"/>
<circle cx="94.6" cy="406.90" r="1.55" fill="#555"/>
<circle cx="100.1" cy="391.30" r="1.55" fill="#555"/>
<circle cx="100.1" cy="396.50" r="1.55" fill="#555"/>
<circle cx="100.1" cy="401.70" r="1.55" fill="#555"/>
<circle cx="100.1" cy="406.90" r="1.55" fill="#555"/>
<rect x="111.3" y="388.60" width="23.4" height="19.7" fill="#5f5f5f"/>
<rect x="113.5" y="394.40" width="4.70" height="5.00" fill="#fff"/>
<rect x="113.5" y="401.50" width="4.70" height="5.00" fill="#fff"/>
<rect x="120.8" y="394.40" width="4.70" height="5.00" fill="#fff"/>
<rect x="120.8" y="401.50" width="4.70" height="5.00" fill="#fff"/>
<rect x="127.9" y="394.40" width="5.00" height="5.00" fill="#fff"/>
<rect x="127.9" y="401.50" width="5.00" height="5.00" fill="#fff"/>
<rect x="124.5" y="397.80" width="11.8" height="12.3" rx="2" fill="#5f5f5f"/>
<path d="M126.6 402.60 L130 405.70 L133.6 402.10" stroke="#fff" stroke-width="1.3" fill="none"/>
<path d="M62 431.12 L70.8 439.42 L62 447.62" stroke="#484848" stroke-width="1.1" fill="none"/>
<circle cx="94.6" cy="429.82" r="1.55" fill="#555"/>
<circle cx="94.6" cy="435.02" r="1.55" fill="#555"/>
<circle cx="94.6" cy="440.22" r="1.55" fill="#555"/>
<circle cx="94.6" cy="445.42" r="1.55" fill="#555"/>
<circle cx="100.1" cy="429.82" r="1.55" fill="#555"/>
<circle cx="100.1" cy="435.02" r="1.55" fill="#555"/>
<circle cx="100.1" cy="440.22" r="1.55" fill="#555"/>
<circle cx="100.1" cy="445.42" r="1.55" fill="#555"/>
<rect x="111.3" y="427.12" width="23.4" height="19.7" fill="#5f5f5f"/>
<rect x="113.5" y="432.92" width="4.70" height="5.00" fill="#fff"/>
<rect x="113.5" y="440.02" width="4.70" height="5.00" fill="#fff"/>
<rect x="120.8" y="432.92" width="4.70" height="5.00" fill="#fff"/>
<rect x="120.8" y="440.02" width="4.70" height="5.00" fill="#fff"/>
<rect x="127.9" y="432.92" width="5.00" height="5.00" fill="#fff"/>
<rect x="127.9" y="440.02" width="5.00" height="5.00" fill="#fff"/>
<rect x="124.5" y="436.32" width="11.8" height="12.3" rx="2" fill="#5f5f5f"/>
<path d="M126.6 441.12 L130 444.22 L133.6 440.62" stroke="#fff" stroke-width="1.3" fill="none"/>
<path d="M62 469.64 L70.8 477.94 L62 486.14" stroke="#484848" stroke-width="1.1" fill="none"/>
<circle cx="94.6" cy="468.34" r="1.55" fill="#555"/>
<circle cx="94.6" cy="473.54" r="1.55" fill="#555"/>
<circle cx="94.6" cy="478.74" r="1.55" fill="#555"/>
<circle cx="94.6" cy="483.94" r="1.55" fill="#555"/>
<circle cx="100.1" cy="468.34" r="1.55" fill="#555"/>
<circle cx="100.1" cy="473.54" r="1.55" fill="#555"/>
<circle cx="100.1" cy="478.74" r="1.55" fill="#555"/>
<circle cx="100.1" cy="483.94" r="1.55" fill="#555"/>
<rect x="111.3" y="465.64" width="23.4" height="19.7" fill="#5f5f5f"/>
<rect x="113.5" y="471.44" width="4.70" height="5.00" fill="#fff"/>
<rect x="113.5" y="478.54" width="4.70" height="5.00" fill="#fff"/>
<rect x="120.8" y="471.44" width="4.70" height="5.00" fill="#fff"/>
<rect x="120.8" y="478.54" width="4.70" height="5.00" fill="#fff"/>
<rect x="127.9" y="471.44" width="5.00" height="5.00" fill="#fff"/>
<rect x="127.9" y="478.54" width="5.00" height="5.00" fill="#fff"/>
<rect x="124.5" y="474.84" width="11.8" height="12.3" rx="2" fill="#5f5f5f"/>
<path d="M126.6 479.64 L130 482.74 L133.6 479.14" stroke="#fff" stroke-width="1.3" fill="none"/>
<path d="M62 508.16 L70.8 516.46 L62 524.66" stroke="#484848" stroke-width="1.1" fill="none"/>
<circle cx="94.6" cy="506.86" r="1.55" fill="#555"/>
<circle cx="94.6" cy="512.06" r="1.55" fill="#555"/>
<circle cx="94.6" cy="517.26" r="1.55" fill="#555"/>
<circle cx="94.6" cy="522.46" r="1.55" fill="#555"/>
<circle cx="100.1" cy="506.86" r="1.55" fill="#555"/>
<circle cx="100.1" cy="512.06" r="1.55" fill="#555"/>
<circle cx="100.1" cy="517.26" r="1.55" fill="#555"/>
<circle cx="100.1" cy="522.46" r="1.55" fill="#555"/>
<rect x="111.3" y="504.16" width="23.4" height="19.7" fill="#5f5f5f"/>
<rect x="113.5" y="509.96" width="4.70" height="5.00" fill="#fff"/>
<rect x="113.5" y="517.06" width="4.70" height="5.00" fill="#fff"/>
<rect x="120.8" y="509.96" width="4.70" height="5.00" fill="#fff"/>
<rect x="120.8" y="517.06" width="4.70" height="5.00" fill="#fff"/>
<rect x="127.9" y="509.96" width="5.00" height="5.00" fill="#fff"/>
<rect x="127.9" y="517.06" width="5.00" height="5.00" fill="#fff"/>
<rect x="124.5" y="513.36" width="11.8" height="12.3" rx="2" fill="#5f5f5f"/>
<path d="M126.6 518.16 L130 521.26 L133.6 517.66" stroke="#fff" stroke-width="1.3" fill="none"/>
<path d="M62 546.68 L70.8 554.98 L62 563.18" stroke="#484848" stroke-width="1.1" fill="none"/>
<circle cx="94.6" cy="545.38" r="1.55" fill="#555"/>
<circle cx="94.6" cy="550.58" r="1.55" fill="#555"/>
<circle cx="94.6" cy="555.78" r="1.55" fill="#555"/>
<circle cx="94.6" cy="560.98" r="1.55" fill="#555"/>
<circle cx="100.1" cy="545.38" r="1.55" fill="#555"/>
<circle cx="100.1" cy="550.58" r="1.55" fill="#555"/>
<circle cx="100.1" cy="555.78" r="1.55" fill="#555"/>
<circle cx="100.1" cy="560.98" r="1.55" fill="#555"/>
<rect x="111.3" y="542.68" width="23.4" height="19.7" fill="#5f5f5f"/>
<rect x="113.5" y="548.48" width="4.70" height="5.00" fill="#fff"/>
<rect x="113.5" y="555.58" width="4.70" height="5.00" fill="#fff"/>
<rect x="120.8" y="548.48" width="4.70" height="5.00" fill="#fff"/>
<rect x="120.8" y="555.58" width="4.70" height="5.00" fill="#fff"/>
<rect x="127.9" y="548.48" width="5.00" height="5.00" fill="#fff"/>
<rect x="127.9" y="555.58" width="5.00" height="5.00" fill="#fff"/>
<rect x="124.5" y="551.88" width="11.8" height="12.3" rx="2" fill="#5f5f5f"/>
<path d="M126.6 556.68 L130 559.78 L133.6 556.18" stroke="#fff" stroke-width="1.3" fill="none"/>
<path d="M62 585.20 L70.8 593.50 L62 601.70" stroke="#484848" stroke-width="1.1" fill="none"/>
<circle cx="94.6" cy="583.90" r="1.55" fill="#555"/>
<circle cx="94.6" cy="589.10" r="1.55" fill="#555"/>
<circle cx="94.6" cy="594.30" r="1.55" fill="#555"/>
<circle cx="94.6" cy="599.50" r="1.55" fill="#555"/>
<circle cx="100.1" cy="583.90" r="1.55" fill="#555"/>
<circle cx="100.1" cy="589.10" r="1.55" fill="#555"/>
<circle cx="100.1" cy="594.30" r="1.55" fill="#555"/>
<circle cx="100.1" cy="599.50" r="1.55" fill="#555"/>
<rect x="111.3" y="581.20" width="23.4" height="19.7" fill="#5f5f5f"/>
<rect x="113.5" y="587.00" width="4.70" height="5.00" fill="#fff"/>
<rect x="113.5" y="594.10" width="4.70" height="5.00" fill="#fff"/>
<rect x="120.8" y="587.00" width="4.70" height="5.00" fill="#fff"/>
<rect x="120.8" y="594.10" width="4.70" height="5.00" fill="#fff"/>
<rect x="127.9" y="587.00" width="5.00" height="5.00" fill="#fff"/>
<rect x="127.9" y="594.10" width="5.00" height="5.00" fill="#fff"/>
<rect x="124.5" y="590.40" width="11.8" height="12.3" rx="2" fill="#5f5f5f"/>
<path d="M126.6 595.20 L130 598.30 L133.6 594.70" stroke="#fff" stroke-width="1.3" fill="none"/>
<path d="M62 623.72 L70.8 632.02 L62 640.22" stroke="#484848" stroke-width="1.1" fill="none"/>
<circle cx="94.6" cy="622.42" r="1.55" fill="#555"/>
<circle cx="94.6" cy="627.62" r="1.55" fill="#555"/>
<circle cx="94.6" cy="632.82" r="1.55" fill="#555"/>
<circle cx="94.6" cy="638.02" r="1.55" fill="#555"/>
<circle cx="100.1" cy="622.42" r="1.55" fill="#555"/>
<circle cx="100.1" cy="627.62" r="1.55" fill="#555"/>
<circle cx="100.1" cy="632.82" r="1.55" fill="#555"/>
<circle cx="100.1" cy="638.02" r="1.55" fill="#555"/>
<rect x="111.3" y="619.72" width="23.4" height="19.7" fill="#5f5f5f"/>
<rect x="113.5" y="625.52" width="4.70" height="5.00" fill="#fff"/>
<rect x="113.5" y="632.62" width="4.70" height="5.00" fill="#fff"/>
<rect x="120.8" y="625.52" width="4.70" height="5.00" fill="#fff"/>
<rect x="120.8" y="632.62" width="4.70" height="5.00" fill="#fff"/>
<rect x="127.9" y="625.52" width="5.00" height="5.00" fill="#fff"/>
<rect x="127.9" y="632.62" width="5.00" height="5.00" fill="#fff"/>
<rect x="124.5" y="628.92" width="11.8" height="12.3" rx="2" fill="#5f5f5f"/>
<path d="M126.6 633.72 L130 636.82 L133.6 633.22" stroke="#fff" stroke-width="1.3" fill="none"/>
<path d="M62 662.24 L70.8 670.54 L62 678.74" stroke="#484848" stroke-width="1.1" fill="none"/>
<circle cx="94.6" cy="660.94" r="1.55" fill="#555"/>
<circle cx="94.6" cy="666.14" r="1.55" fill="#555"/>
<circle cx="94.6" cy="671.34" r="1.55" fill="#555"/>
<circle cx="94.6" cy="676.54" r="1.55" fill="#555"/>
<circle cx="100.1" cy="660.94" r="1.55" fill="#555"/>
<circle cx="100.1" cy="666.14" r="1.55" fill="#555"/>
<circle cx="100.1" cy="671.34" r="1.55" fill="#555"/>
<circle cx="100.1" cy="676.54" r="1.55" fill="#555"/>
<rect x="111.3" y="658.24" width="23.4" height="19.7" fill="#5f5f5f"/>
<rect x="113.5" y="664.04" width="4.70" height="5.00" fill="#fff"/>
<rect x="113.5" y="671.14" width="4.70" height="5.00" fill="#fff"/>
<rect x="120.8" y="664.04" width="4.70" height="5.00" fill="#fff"/>
<rect x="120.8" y="671.14" width="4.70" height="5.00" fill="#fff"/>
<rect x="127.9" y="664.04" width="5.00" height="5.00" fill="#fff"/>
<rect x="127.9" y="671.14" width="5.00" height="5.00" fill="#fff"/>
<rect x="124.5" y="667.44" width="11.8" height="12.3" rx="2" fill="#5f5f5f"/>
<path d="M126.6 672.24 L130 675.34 L133.6 671.74" stroke="#fff" stroke-width="1.3" fill="none"/>
<path d="M62 700.76 L70.8 709.06 L62 717.26" stroke="#484848" stroke-width="1.1" fill="none"/>
<circle cx="94.6" cy="699.46" r="1.55" fill="#555"/>
<circle cx="94.6" cy="704.66" r="1.55" fill="#555"/>
<circle cx="94.6" cy="709.86" r="1.55" fill="#555"/>
<circle cx="94.6" cy="715.06" r="1.55" fill="#555"/>
<circle cx="100.1" cy="699.46" r="1.55" fill="#555"/>
<circle cx="100.1" cy="704.66" r="1.55" fill="#555"/>
<circle cx="100.1" cy="709.86" r="1.55" fill="#555"/>
<circle cx="100.1" cy="715.06" r="1.55" fill="#555"/>
<rect x="111.3" y="696.76" width="23.4" height="19.7" fill="#5f5f5f"/>
<rect x="113.5" y="702.56" width="4.70" height="5.00" fill="#fff"/>
<rect x="113.5" y="709.66" width="4.70" height="5.00" fill="#fff"/>
<rect x="120.8" y="702.56" width="4.70" height="5.00" fill="#fff"/>
<rect x="120.8" y="709.66" width="4.70" height="5.00" fill="#fff"/>
<rect x="127.9" y="702.56" width="5.00" height="5.00" fill="#fff"/>
<rect x="127.9" y="709.66" width="5.00" height="5.00" fill="#fff"/>
<rect x="124.5" y="705.96" width="11.8" height="12.3" rx="2" fill="#5f5f5f"/>
<path d="M126.6 710.76 L130 713.86 L133.6 710.26" stroke="#fff" stroke-width="1.3" fill="none"/>
<path d="M62 739.28 L70.8 747.58 L62 755.78" stroke="#484848" stroke-width="1.1" fill="none"/>
<circle cx="94.6" cy="737.98" r="1.55" fill="#555"/>
<circle cx="94.6" cy="743.18" r="1.55" fill="#555"/>
<circle cx="94.6" cy="748.38" r="1.55" fill="#555"/>
<circle cx="94.6" cy="753.58" r="1.55" fill="#555"/>
<circle cx="100.1" cy="737.98" r="1.55" fill="#555"/>
<circle cx="100.1" cy="743.18" r="1.55" fill="#555"/>
<circle cx="100.1" cy="748.38" r="1.55" fill="#555"/>
<circle cx="100.1" cy="753.58" r="1.55" fill="#555"/>
<rect x="111.3" y="735.28" width="23.4" height="19.7" fill="#5f5f5f"/>
<rect x="113.5" y="741.08" width="4.70" height="5.00" fill="#fff"/>
<rect x="113.5" y="748.18" width="4.70" height="5.00" fill="#fff"/>
<rect x="120.8" y="741.08" width="4.70" height="5.00" fill="#fff"/>
<rect x="120.8" y="748.18" width="4.70" height="5.00" fill="#fff"/>
<rect x="127.9" y="741.08" width="5.00" height="5.00" fill="#fff"/>
<rect x="127.9" y="748.18" width="5.00" height="5.00" fill="#fff"/>
<rect x="124.5" y="744.48" width="11.8" height="12.3" rx="2" fill="#5f5f5f"/>
<path d="M126.6 749.28 L130 752.38 L133.6 748.78" stroke="#fff" stroke-width="1.3" fill="none"/>
<path d="M62 777.80 L70.8 786.10 L62 794.30" stroke="#484848" stroke-width="1.1" fill="none"/>
<circle cx="94.6" cy="776.50" r="1.55" fill="#555"/>
<circle cx="94.6" cy="781.70" r="1.55" fill="#555"/>
<circle cx="94.6" cy="786.90" r="1.55" fill="#555"/>
<circle cx="94.6" cy="792.10" r="1.55" fill="#555"/>
<circle cx="100.1" cy="776.50" r="1.55" fill="#555"/>
<circle cx="100.1" cy="781.70" r="1.55" fill="#555"/>
<circle cx="100.1" cy="786.90" r="1.55" fill="#555"/>
<circle cx="100.1" cy="792.10" r="1.55" fill="#555"/>
<rect x="111.3" y="773.80" width="23.4" height="19.7" fill="#5f5f5f"/>
<rect x="113.5" y="779.60" width="4.70" height="5.00" fill="#fff"/>
<rect x="113.5" y="786.70" width="4.70" height="5.00" fill="#fff"/>
<rect x="120.8" y="779.60" width="4.70" height="5.00" fill="#fff"/>
<rect x="120.8" y="786.70" width="4.70" height="5.00" fill="#fff"/>
<rect x="127.9" y="779.60" width="5.00" height="5.00" fill="#fff"/>
<rect x="127.9" y="786.70" width="5.00" height="5.00" fill="#fff"/>
<rect x="124.5" y="783.00" width="11.8" height="12.3" rx="2" fill="#5f5f5f"/>
<path d="M126.6 787.80 L130 790.90 L133.6 787.30" stroke="#fff" stroke-width="1.3" fill="none"/>
<path d="M62 816.32 L70.8 824.62 L62 832.82" stroke="#484848" stroke-width="1.1" fill="none"/>
<circle cx="94.6" cy="815.02" r="1.55" fill="#555"/>
<circle cx="94.6" cy="820.22" r="1.55" fill="#555"/>
<circle cx="94.6" cy="825.42" r="1.55" fill="#555"/>
<circle cx="94.6" cy="830.62" r="1.55" fill="#555"/>
<circle cx="100.1" cy="815.02" r="1.55" fill="#555"/>
<circle cx="100.1" cy="820.22" r="1.55" fill="#555"/>
<circle cx="100.1" cy="825.42" r="1.55" fill="#555"/>
<circle cx="100.1" cy="830.62" r="1.55" fill="#555"/>
<rect x="111.3" y="812.32" width="23.4" height="19.7" fill="#5f5f5f"/>
<rect x="113.5" y="818.12" width="4.70" height="5.00" fill="#fff"/>
<rect x="113.5" y="825.22" width="4.70" height="5.00" fill="#fff"/>
<rect x="120.8" y="818.12" width="4.70" height="5.00" fill="#fff"/>
<rect x="120.8" y="825.22" width="4.70" height="5.00" fill="#fff"/>
<rect x="127.9" y="818.12" width="5.00" height="5.00" fill="#fff"/>
<rect x="127.9" y="825.22" width="5.00" height="5.00" fill="#fff"/>
<rect x="124.5" y="821.52" width="11.8" height="12.3" rx="2" fill="#5f5f5f"/>
<path d="M126.6 826.32 L130 829.42 L133.6 825.82" stroke="#fff" stroke-width="1.3" fill="none"/>
<path d="M62 854.84 L70.8 863.14 L62 871.34" stroke="#484848" stroke-width="1.1" fill="none"/>
<circle cx="94.6" cy="853.54" r="1.55" fill="#555"/>
<circle cx="94.6" cy="858.74" r="1.55" fill="#555"/>
<circle cx="94.6" cy="863.94" r="1.55" fill="#555"/>
<circle cx="94.6" cy="869.14" r="1.55" fill="#555"/>
<circle cx="100.1" cy="853.54" r="1.55" fill="#555"/>
<circle cx="100.1" cy="858.74" r="1.55" fill="#555"/>
<circle cx="100.1" cy="863.94" r="1.55" fill="#555"/>
<circle cx="100.1" cy="869.14" r="1.55" fill="#555"/>
<rect x="111.3" y="850.84" width="23.4" height="19.7" fill="#5f5f5f"/>
<rect x="113.5" y="856.64" width="4.70" height="5.00" fill="#fff"/>
<rect x="113.5" y="863.74" width="4.70" height="5.00" fill="#fff"/>
<rect x="120.8" y="856.64" width="4.70" height="5.00" fill="#fff"/>
<rect x="120.8" y="863.74" width="4.70" height="5.00" fill="#fff"/>
<rect x="127.9" y="856.64" width="5.00" height="5.00" fill="#fff"/>
<rect x="127.9" y="863.74" width="5.00" height="5.00" fill="#fff"/>
<rect x="124.5" y="860.04" width="11.8" height="12.3" rx="2" fill="#5f5f5f"/>
<path d="M126.6 864.84 L130 867.94 L133.6 864.34" stroke="#fff" stroke-width="1.3" fill="none"/>
</svg>
<div class="t" style="left:143.9px;top:198.13px;font-size:20.4px;line-height:20.4px;color:#3a3a3a;transform:scale(1.014,1.06);transform-origin:0 17.27px;">CountryRegionCurrency</div>
<div class="t" style="left:143.9px;top:236.65px;font-size:20.4px;line-height:20.4px;color:#3a3a3a;transform:scale(0.996,1.06);transform-origin:0 17.27px;">CreditCard</div>
<div class="t" style="left:143.9px;top:275.17px;font-size:20.4px;line-height:20.4px;color:#3a3a3a;transform:scale(0.982,1.06);transform-origin:0 17.27px;">Currency</div>
<div class="t" style="left:143.9px;top:313.69px;font-size:20.4px;line-height:20.4px;color:#3a3a3a;transform:scale(0.988,1.06);transform-origin:0 17.27px;">SalesOrderDetail</div>
<div class="t" style="left:143.9px;top:352.21px;font-size:20.4px;line-height:20.4px;color:#3a3a3a;transform:scale(0.983,1.06);transform-origin:0 17.27px;">CurrencyRate</div>
<div class="t" style="left:143.9px;top:390.73px;font-size:20.4px;line-height:20.4px;color:#3a3a3a;transform:scale(1.012,1.06);transform-origin:0 17.27px;">Customer</div>
<div class="t" style="left:143.9px;top:429.25px;font-size:20.4px;line-height:20.4px;color:#3a3a3a;transform:scale(0.979,1.06);transform-origin:0 17.27px;">SalesOrderHeader</div>
<div class="t" style="left:143.9px;top:467.77px;font-size:20.4px;line-height:20.4px;color:#3a3a3a;transform:scale(1.004,1.06);transform-origin:0 17.27px;">CustomerAddress</div>
<div class="t" style="left:143.9px;top:506.29px;font-size:20.4px;line-height:20.4px;color:#3a3a3a;transform:scale(0.968,1.06);transform-origin:0 17.27px;">SalesOrderHeaderSalesReason</div>
<div class="t" style="left:143.9px;top:544.81px;font-size:20.4px;line-height:20.4px;color:#3a3a3a;transform:scale(0.933,1.06);transform-origin:0 17.27px;">SalesPerson</div>
<div class="t" style="left:143.9px;top:583.33px;font-size:20.4px;line-height:20.4px;color:#3a3a3a;transform:scale(0.975,1.06);transform-origin:0 17.27px;">SalesPersonQuotaHistory</div>
<div class="t" style="left:143.9px;top:621.85px;font-size:20.4px;line-height:20.4px;color:#3a3a3a;transform:scale(0.927,1.06);transform-origin:0 17.27px;">SalesReason</div>
<div class="t" style="left:143.9px;top:660.37px;font-size:20.4px;line-height:20.4px;color:#3a3a3a;transform:scale(1.045,1.06);transform-origin:0 17.27px;">Individual</div>
<div class="t" style="left:143.9px;top:698.89px;font-size:20.4px;line-height:20.4px;color:#3a3a3a;transform:scale(0.925,1.06);transform-origin:0 17.27px;">SalesTaxRate</div>
<div class="t" style="left:143.9px;top:737.41px;font-size:20.4px;line-height:20.4px;color:#3a3a3a;transform:scale(0.975,1.06);transform-origin:0 17.27px;">SalesTerritory</div>
<div class="t" style="left:143.9px;top:775.93px;font-size:20.4px;line-height:20.4px;color:#3a3a3a;transform:scale(0.994,1.06);transform-origin:0 17.27px;">SalesTerritoryHistory</div>
<div class="t" style="left:143.9px;top:814.45px;font-size:20.4px;line-height:20.4px;color:#3a3a3a;transform:scale(1.025,1.06);transform-origin:0 17.27px;">ShoppingCartItem</div>
<div class="t" style="left:143.9px;top:852.97px;font-size:20.4px;line-height:20.4px;color:#3a3a3a;transform:scale(1.000,1.06);transform-origin:0 17.27px;">SpecialOffer</div>
</div></div>
</body></html>
